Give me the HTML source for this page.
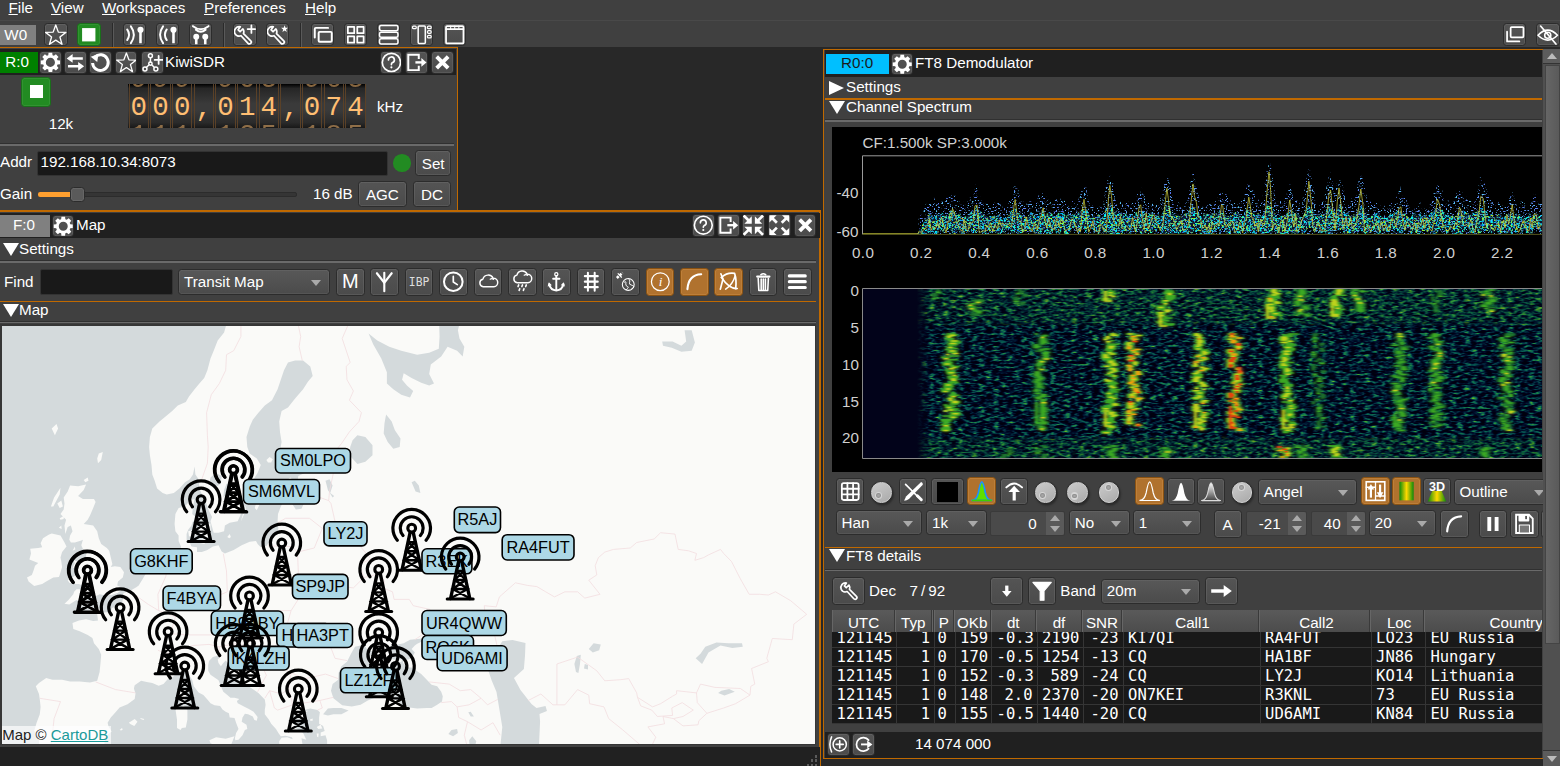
<!DOCTYPE html><html><head><meta charset="utf-8"><title>SDRangel</title><style>
*{box-sizing:border-box;margin:0;padding:0}
html,body{width:1560px;height:766px;overflow:hidden;background:#404040}
body{position:relative;font-family:"Liberation Sans",sans-serif;font-size:15.2px;color:#fff;line-height:1}
.a{position:absolute}
.t{position:absolute;white-space:nowrap;line-height:17px;height:17px}
.b{position:absolute;border:1px solid #2c2c2c;border-radius:3.5px;background:linear-gradient(#545454,#4b4b4b);box-shadow:inset 0 0 0 1px rgba(255,255,255,.075)}
.b.on{background:#b0722e;border-color:#8a5212;box-shadow:inset 0 0 0 1px rgba(255,190,110,.18)}
.b svg{position:absolute;left:0;top:0;width:100%;height:100%}
.or{position:absolute;background:#c06900}
.cb{position:absolute;border:1px solid #2c2c2c;border-radius:3.5px;background:linear-gradient(#585858,#4b4b4b);box-shadow:inset 0 0 0 1px rgba(255,255,255,.06)}
.cb span{position:absolute;left:5px;top:50%;margin-top:-9px;line-height:17px;white-space:nowrap}
.cb i{position:absolute;right:8px;top:50%;margin-top:-2px;border:5px solid transparent;border-top:6px solid #aaa;border-bottom:0}
.sp{position:absolute;border:1px solid #3a3a3a;border-radius:2px;background:#4a4a4a}
.sp span{position:absolute;top:50%;margin-top:-8px;line-height:17px;text-align:right}
.sp em{position:absolute;right:0;top:0;bottom:0;width:18px;background:#5a5a5a;border-radius:0 2px 2px 0}
.sp em:before{content:"";position:absolute;left:4px;top:3px;border:5px solid transparent;border-bottom:6px solid #aaa;border-top:0}
.sp em:after{content:"";position:absolute;left:4px;bottom:3px;border:5px solid transparent;border-top:6px solid #aaa;border-bottom:0}
.hl{position:absolute;height:1.5px;background:#6a6a6a;box-shadow:0 -1px 0 #303030}
.tri{position:absolute;width:0;height:0}
.mono{font-family:"DejaVu Sans Mono","Liberation Mono",monospace}
</style></head><body>
<div class="t " style="left:8.5px;top:-1.1px;"><u>F</u>ile</div>
<div class="t " style="left:51px;top:-1.1px;"><u>V</u>iew</div>
<div class="t " style="left:102px;top:-1.1px;"><u>W</u>orkspaces</div>
<div class="t " style="left:204px;top:-1.1px;"><u>P</u>references</div>
<div class="t " style="left:305px;top:-1.1px;"><u>H</u>elp</div>
<div class="a" style="left:0px;top:20px;width:1560px;height:1px;background:rgba(255,255,255,.05);"></div>
<div class="a" style="left:0px;top:24.5px;width:36px;height:20.5px;background:#808080;"></div>
<div class="t " style="left:4.3px;top:25.6px;">W0</div>
<div class="b " style="left:44px;top:22.7px;width:23.5px;height:23.5px;"><svg viewBox="1.5 1.5 21 21" fill="none" stroke="#fff" stroke-width="1.6" stroke-linecap="round" stroke-linejoin="round"><polygon points="12.00,2.50 14.53,9.42 21.89,9.69 16.09,14.23 18.11,21.31 12.00,17.20 5.89,21.31 7.91,14.23 2.11,9.69 9.47,9.42" stroke-width="1.3"/></svg></div>
<div class="b " style="left:77px;top:22.7px;width:23.5px;height:23.5px;background:#228b22;border-color:#1a6e1a"><svg viewBox="1.5 1.5 21 21" fill="none" stroke="#fff" stroke-width="1.6" stroke-linecap="round" stroke-linejoin="round"><rect x="5.5" y="5.5" width="13" height="13" fill="#fff" stroke="none"/></svg></div>
<div class="b " style="left:122.5px;top:22.7px;width:23.5px;height:23.5px;"><svg viewBox="1.5 1.5 21 21" fill="none" stroke="#fff" stroke-width="1.6" stroke-linecap="round" stroke-linejoin="round"><path d="M4.6 6.8Q8.2 12 4.6 17.2M8.2 3.8Q14 12 8.2 20.2" stroke-width="1.9"/><circle cx="17.6" cy="7.2" r="3" fill="#fff" stroke="none"/><path d="M17.6 8V20.3" stroke-width="2.5" stroke-linecap="butt"/></svg></div>
<div class="b " style="left:155.5px;top:22.7px;width:23.5px;height:23.5px;"><svg viewBox="1.5 1.5 21 21" fill="none" stroke="#fff" stroke-width="1.6" stroke-linecap="round" stroke-linejoin="round"><path d="M11 6.8Q7.4 12 11 17.2M7.4 3.8Q1.6 12 7.4 20.2" stroke-width="1.9"/><circle cx="17.6" cy="7.2" r="3" fill="#fff" stroke="none"/><path d="M17.6 8V20.3" stroke-width="2.5" stroke-linecap="butt"/></svg></div>
<div class="b " style="left:188.5px;top:22.7px;width:23.5px;height:23.5px;"><svg viewBox="1.5 1.5 21 21" fill="none" stroke="#fff" stroke-width="1.6" stroke-linecap="round" stroke-linejoin="round"><path d="M4.4 3.6Q12 9.6 19.6 3.6M7.2 7.2Q12 11 16.8 7.2" stroke-width="1.9"/><circle cx="7.6" cy="14" r="2.9" fill="#fff" stroke="none"/><circle cx="16.4" cy="14" r="2.9" fill="#fff" stroke="none"/><path d="M7.6 14.5V21.3M16.4 14.5V21.3" stroke-width="2.5" stroke-linecap="butt"/></svg></div>
<div class="b " style="left:233px;top:22.7px;width:23.5px;height:23.5px;"><svg viewBox="1.5 1.5 21 21" fill="none" stroke="#fff" stroke-width="1.6" stroke-linecap="round" stroke-linejoin="round"><g transform="translate(-1.5 1) scale(.95)"><path d="M9.6 3.4A5 5 0 0 0 4 10.2A5 5 0 0 0 10.4 12.6L17.6 20.4A1.9 1.9 0 0 0 20.4 17.8L12.9 10.3A5 5 0 0 0 12.3 5.6L9.4 8.5L7.4 6.5Z" stroke-width="1.8"/></g><path d="M18.5 2.8V10.2M14.8 6.5H22.2" stroke-width="1.7"/></svg></div>
<div class="b " style="left:265.6px;top:22.7px;width:23.5px;height:23.5px;"><svg viewBox="1.5 1.5 21 21" fill="none" stroke="#fff" stroke-width="1.6" stroke-linecap="round" stroke-linejoin="round"><g transform="translate(-1.5 1) scale(.95)"><path d="M9.6 3.4A5 5 0 0 0 4 10.2A5 5 0 0 0 10.4 12.6L17.6 20.4A1.9 1.9 0 0 0 20.4 17.8L12.9 10.3A5 5 0 0 0 12.3 5.6L9.4 8.5L7.4 6.5Z" stroke-width="1.8"/></g><polygon points="18.70,2.70 19.58,5.09 22.12,5.19 20.13,6.76 20.82,9.21 18.70,7.80 16.58,9.21 17.27,6.76 15.28,5.19 17.82,5.09" fill="#fff" stroke="none"/></svg></div>
<div class="b " style="left:310.6px;top:22.7px;width:23.5px;height:23.5px;"><svg viewBox="1.5 1.5 21 21" fill="none" stroke="#fff" stroke-width="1.6" stroke-linecap="round" stroke-linejoin="round"><rect x="8" y="9.2" width="12.8" height="9.6" rx="1" stroke-width="1.9"/><path d="M4.2 14.8V6.3Q4.2 5.3 5.2 5.3H17.2" stroke-width="1.9"/></svg></div>
<div class="b " style="left:343.6px;top:22.7px;width:23.5px;height:23.5px;"><svg viewBox="1.5 1.5 21 21" fill="none" stroke="#fff" stroke-width="1.6" stroke-linecap="round" stroke-linejoin="round"><rect x="4.3" y="4.3" width="6.2" height="6.2" stroke-width="1.7"/><rect x="13.5" y="4.3" width="6.2" height="6.2" stroke-width="1.7"/><rect x="4.3" y="13.5" width="6.2" height="6.2" stroke-width="1.7"/><rect x="13.5" y="13.5" width="6.2" height="6.2" stroke-width="1.7"/></svg></div>
<div class="b " style="left:376.6px;top:22.7px;width:23.5px;height:23.5px;"><svg viewBox="1.5 1.5 21 21" fill="none" stroke="#fff" stroke-width="1.6" stroke-linecap="round" stroke-linejoin="round"><rect x="3" y="3" width="18" height="5" rx="1.5" stroke-width="1.5"/><rect x="3" y="9.5" width="18" height="5" rx="1.5" stroke-width="1.5"/><rect x="3" y="16" width="18" height="5" rx="1.5" stroke-width="1.5"/></svg></div>
<div class="b " style="left:409.6px;top:22.7px;width:23.5px;height:23.5px;"><svg viewBox="1.5 1.5 21 21" fill="none" stroke="#fff" stroke-width="1.6" stroke-linecap="round" stroke-linejoin="round"><rect x="8.5" y="3.5" width="7" height="17" rx="1" stroke-width="1.5"/><rect x="3" y="3.5" width="3.6" height="2.6" rx="1" stroke-width="1.2"/><rect x="17.6" y="3.5" width="3.6" height="2.6" rx="1" stroke-width="1.2"/><rect x="17.6" y="8" width="3.6" height="2.6" rx="1" stroke-width="1.2"/><rect x="17.6" y="12.5" width="3.6" height="2.6" rx="1" stroke-width="1.2"/></svg></div>
<div class="b " style="left:442.6px;top:22.7px;width:23.5px;height:23.5px;"><svg viewBox="1.5 1.5 21 21" fill="none" stroke="#fff" stroke-width="1.6" stroke-linecap="round" stroke-linejoin="round"><rect x="3.5" y="3.5" width="17" height="17" rx="1" stroke-width="1.7"/><path d="M3.5 6.5H20.5" stroke-width="1.7"/><path d="M8 3.5V6.5M12 3.5V6.5M16 3.5V6.5" stroke-width="1"/></svg></div>
<div class="b " style="left:1502.7px;top:22.7px;width:23.5px;height:23.5px;"><svg viewBox="1.5 1.5 21 21" fill="none" stroke="#fff" stroke-width="1.6" stroke-linecap="round" stroke-linejoin="round"><rect x="8" y="4.5" width="12.5" height="10" rx="1" stroke-width="1.7"/><path d="M4.5 9V18.5H16.5" stroke-width="1.7"/></svg></div>
<div class="b " style="left:1536px;top:22.7px;width:23.5px;height:23.5px;"><svg viewBox="1.5 1.5 21 21" fill="none" stroke="#fff" stroke-width="1.6" stroke-linecap="round" stroke-linejoin="round"><path d="M2.5 12.5Q12 2.5 21.5 12.5Q12 22 2.5 12.5Z" stroke-width="1.6"/><circle cx="12" cy="12.5" r="3" stroke-width="1.5"/><path d="M5 3.5L20 21" stroke-width="1.7"/></svg></div>
<div class="a" style="left:112px;top:23px;width:1px;height:24px;background:#2a2a2a;"></div>
<div class="a" style="left:113px;top:23px;width:1px;height:24px;background:#5a5a5a;"></div>
<div class="a" style="left:223px;top:23px;width:1px;height:24px;background:#2a2a2a;"></div>
<div class="a" style="left:224px;top:23px;width:1px;height:24px;background:#5a5a5a;"></div>
<div class="a" style="left:300px;top:23px;width:1px;height:24px;background:#2a2a2a;"></div>
<div class="a" style="left:301px;top:23px;width:1px;height:24px;background:#5a5a5a;"></div>
<div class="a" style="left:0px;top:47px;width:1560px;height:719px;background:#282828;"></div>
<div class="a" style="left:-2px;top:47px;width:459.5px;height:164.5px;background:#404040;border:1.5px solid #c06900"></div>
<div class="a" style="left:0px;top:48.5px;width:456px;height:26px;background:#202020;"></div>
<div class="a" style="left:0px;top:52px;width:37.5px;height:20.5px;background:#008000;"></div>
<div class="t " style="left:5.2px;top:53.0px;">R:0</div>
<div class="b " style="left:39px;top:51px;width:22.8px;height:22.8px;"><svg viewBox="1.5 1.5 21 21" fill="none" stroke="#fff" stroke-width="1.6" stroke-linecap="round" stroke-linejoin="round"><path fill="#fff" fill-rule="evenodd" stroke="none" d="M21.72,10.13L21.72,13.87L19.19,14.14L18.60,15.56L20.20,17.55L17.55,20.20L15.57,18.60L14.15,19.19L13.87,21.72L10.13,21.72L9.86,19.19L8.44,18.60L6.45,20.20L3.80,17.55L5.40,15.57L4.81,14.15L2.28,13.87L2.28,10.13L4.81,9.86L5.40,8.44L3.80,6.45L6.45,3.80L8.43,5.40L9.85,4.81L10.13,2.28L13.87,2.28L14.14,4.81L15.56,5.40L17.55,3.80L20.20,6.45L18.60,8.43L19.19,9.85Z M12 7.4A4.6 4.6 0 1 0 12 16.6A4.6 4.6 0 1 0 12 7.4Z"/></svg></div>
<div class="b " style="left:64px;top:51px;width:22.8px;height:22.8px;"><svg viewBox="1.5 1.5 21 21" fill="none" stroke="#fff" stroke-width="1.6" stroke-linecap="round" stroke-linejoin="round"><path d="M8 8H19.5M16 16H4.5" stroke-width="2.5" stroke-linecap="butt"/><path d="M3.2 8L9.2 3.6V12.4ZM20.8 16L14.8 11.6V20.4Z" fill="#fff" stroke="none"/></svg></div>
<div class="b " style="left:89px;top:51px;width:22.8px;height:22.8px;"><svg viewBox="1.5 1.5 21 21" fill="none" stroke="#fff" stroke-width="1.6" stroke-linecap="round" stroke-linejoin="round"><path d="M6.6 6.4A7.9 7.9 0 1 1 4.1 12.6" stroke-width="3" stroke-linecap="butt"/><path d="M2.2 6.2L10 3.4L8.8 11.6Z" fill="#fff" stroke="none"/></svg></div>
<div class="b " style="left:114.5px;top:51px;width:22.8px;height:22.8px;"><svg viewBox="1.5 1.5 21 21" fill="none" stroke="#fff" stroke-width="1.6" stroke-linecap="round" stroke-linejoin="round"><polygon points="12.00,2.50 14.53,9.42 21.89,9.69 16.09,14.23 18.11,21.31 12.00,17.20 5.89,21.31 7.91,14.23 2.11,9.69 9.47,9.42" stroke-width="1.3"/></svg></div>
<div class="b " style="left:141px;top:51px;width:22.8px;height:22.8px;"><svg viewBox="1.5 1.5 21 21" fill="none" stroke="#fff" stroke-width="1.6" stroke-linecap="round" stroke-linejoin="round"><circle cx="10" cy="5.2" r="2" stroke-width="1.5"/><circle cx="4.5" cy="18.6" r="2" stroke-width="1.5"/><circle cx="15.5" cy="18.6" r="2" stroke-width="1.5"/><circle cx="10" cy="13.2" r="1.7" stroke-width="1.5"/><path d="M10 7.2V11.5M8.7 14.4L5.9 17.1M11.3 14.4L14.1 17.1" stroke-width="1.5"/><path d="M18.3 5.5V13.5M14.3 9.5H22.3" stroke-width="1.8"/></svg></div>
<div class="b " style="left:379.7px;top:51px;width:22.8px;height:22.8px;"><svg viewBox="1.5 1.5 21 21" fill="none" stroke="#fff" stroke-width="1.6" stroke-linecap="round" stroke-linejoin="round"><circle cx="12" cy="12" r="9.2" stroke-width="1.7"/><path d="M9 9.6A3 3 0 1 1 12.8 12.4Q12 12.9 12 14.2" stroke-width="1.7"/><circle cx="12" cy="17" r="1.1" fill="#fff" stroke="none"/></svg></div>
<div class="b " style="left:405.4px;top:51px;width:22.8px;height:22.8px;"><svg viewBox="1.5 1.5 21 21" fill="none" stroke="#fff" stroke-width="1.6" stroke-linecap="round" stroke-linejoin="round"><path d="M14.4 8.6V4.2H3.8V19.8H14.4V15.4" stroke-width="2" stroke-linejoin="miter" stroke-linecap="butt"/><path d="M11 12H18" stroke-width="2.4" stroke-linecap="butt"/><path d="M17 7.6L22.2 12L17 16.4Z" fill="#fff" stroke="none"/></svg></div>
<div class="b " style="left:431px;top:51px;width:22.8px;height:22.8px;"><svg viewBox="1.5 1.5 21 21" fill="none" stroke="#fff" stroke-width="1.6" stroke-linecap="round" stroke-linejoin="round"><path d="M6.2 6.2L17.8 17.8M17.8 6.2L6.2 17.8" stroke-width="3.9" stroke-linecap="butt"/></svg></div>
<div class="t " style="left:165px;top:53.0px;">KiwiSDR</div>
<div class="b" style="left:20.7px;top:77.3px;width:30px;height:29.3px;background:#228b22;border-color:#1a6e1a"></div>
<div class="a" style="left:29.5px;top:85px;width:13px;height:13px;background:#fff;"></div>
<div class="t " style="left:48.7px;top:115.2px;">12k</div>
<div class="t " style="left:377px;top:98.4px;">kHz</div>
<div class="a" style="left:128px;top:84px;width:238.3px;height:44px;overflow:hidden;background:linear-gradient(#000,#262626 10%,#3a3a3a 45%,#3a3a3a 60%,#2a2a2a 88%,#181818);font-family:'Liberation Mono',monospace;font-size:27.5px;color:#ffbe72">
<div class="a" style="left:0.60px;top:0;width:1px;height:44px;background:#5a4128"></div><div class="a" style="left:19.86px;top:0;width:1px;height:44px;background:#5a4128"></div>
<div class="a" style="left:0.00px;top:-19.8px;width:21.66px;height:31px;line-height:31px;text-align:center;opacity:0.5">9</div>
<div class="a" style="left:0.00px;top:8.4px;width:21.66px;height:31px;line-height:31px;text-align:center;opacity:1">0</div>
<div class="a" style="left:0.00px;top:35.6px;width:21.66px;height:31px;line-height:31px;text-align:center;opacity:0.5">1</div>
<div class="a" style="left:22.26px;top:0;width:1px;height:44px;background:#5a4128"></div><div class="a" style="left:41.53px;top:0;width:1px;height:44px;background:#5a4128"></div>
<div class="a" style="left:21.66px;top:-19.8px;width:21.66px;height:31px;line-height:31px;text-align:center;opacity:0.5">9</div>
<div class="a" style="left:21.66px;top:8.4px;width:21.66px;height:31px;line-height:31px;text-align:center;opacity:1">0</div>
<div class="a" style="left:21.66px;top:35.6px;width:21.66px;height:31px;line-height:31px;text-align:center;opacity:0.5">1</div>
<div class="a" style="left:43.93px;top:0;width:1px;height:44px;background:#5a4128"></div><div class="a" style="left:63.19px;top:0;width:1px;height:44px;background:#5a4128"></div>
<div class="a" style="left:43.33px;top:-19.8px;width:21.66px;height:31px;line-height:31px;text-align:center;opacity:0.5">9</div>
<div class="a" style="left:43.33px;top:8.4px;width:21.66px;height:31px;line-height:31px;text-align:center;opacity:1">0</div>
<div class="a" style="left:43.33px;top:35.6px;width:21.66px;height:31px;line-height:31px;text-align:center;opacity:0.5">1</div>
<div class="a" style="left:65.59px;top:0;width:1px;height:44px;background:#5a4128"></div><div class="a" style="left:84.85px;top:0;width:1px;height:44px;background:#5a4128"></div>
<div class="a" style="left:64.99px;top:8.6px;width:21.66px;height:31px;line-height:31px;text-align:center">,</div>
<div class="a" style="left:87.25px;top:0;width:1px;height:44px;background:#5a4128"></div><div class="a" style="left:106.52px;top:0;width:1px;height:44px;background:#5a4128"></div>
<div class="a" style="left:86.65px;top:-19.8px;width:21.66px;height:31px;line-height:31px;text-align:center;opacity:0.5">9</div>
<div class="a" style="left:86.65px;top:8.4px;width:21.66px;height:31px;line-height:31px;text-align:center;opacity:1">0</div>
<div class="a" style="left:86.65px;top:35.6px;width:21.66px;height:31px;line-height:31px;text-align:center;opacity:0.5">1</div>
<div class="a" style="left:108.92px;top:0;width:1px;height:44px;background:#5a4128"></div><div class="a" style="left:128.18px;top:0;width:1px;height:44px;background:#5a4128"></div>
<div class="a" style="left:108.32px;top:-19.8px;width:21.66px;height:31px;line-height:31px;text-align:center;opacity:0.5">0</div>
<div class="a" style="left:108.32px;top:8.4px;width:21.66px;height:31px;line-height:31px;text-align:center;opacity:1">1</div>
<div class="a" style="left:108.32px;top:35.6px;width:21.66px;height:31px;line-height:31px;text-align:center;opacity:0.5">2</div>
<div class="a" style="left:130.58px;top:0;width:1px;height:44px;background:#5a4128"></div><div class="a" style="left:149.85px;top:0;width:1px;height:44px;background:#5a4128"></div>
<div class="a" style="left:129.98px;top:-19.8px;width:21.66px;height:31px;line-height:31px;text-align:center;opacity:0.5">3</div>
<div class="a" style="left:129.98px;top:8.4px;width:21.66px;height:31px;line-height:31px;text-align:center;opacity:1">4</div>
<div class="a" style="left:129.98px;top:35.6px;width:21.66px;height:31px;line-height:31px;text-align:center;opacity:0.5">5</div>
<div class="a" style="left:152.25px;top:0;width:1px;height:44px;background:#5a4128"></div><div class="a" style="left:171.51px;top:0;width:1px;height:44px;background:#5a4128"></div>
<div class="a" style="left:151.65px;top:8.6px;width:21.66px;height:31px;line-height:31px;text-align:center">,</div>
<div class="a" style="left:173.91px;top:0;width:1px;height:44px;background:#5a4128"></div><div class="a" style="left:193.17px;top:0;width:1px;height:44px;background:#5a4128"></div>
<div class="a" style="left:173.31px;top:-19.8px;width:21.66px;height:31px;line-height:31px;text-align:center;opacity:0.5">9</div>
<div class="a" style="left:173.31px;top:8.4px;width:21.66px;height:31px;line-height:31px;text-align:center;opacity:1">0</div>
<div class="a" style="left:173.31px;top:35.6px;width:21.66px;height:31px;line-height:31px;text-align:center;opacity:0.5">1</div>
<div class="a" style="left:195.57px;top:0;width:1px;height:44px;background:#5a4128"></div><div class="a" style="left:214.84px;top:0;width:1px;height:44px;background:#5a4128"></div>
<div class="a" style="left:194.97px;top:-19.8px;width:21.66px;height:31px;line-height:31px;text-align:center;opacity:0.5">6</div>
<div class="a" style="left:194.97px;top:8.4px;width:21.66px;height:31px;line-height:31px;text-align:center;opacity:1">7</div>
<div class="a" style="left:194.97px;top:35.6px;width:21.66px;height:31px;line-height:31px;text-align:center;opacity:0.5">8</div>
<div class="a" style="left:217.24px;top:0;width:1px;height:44px;background:#5a4128"></div><div class="a" style="left:236.50px;top:0;width:1px;height:44px;background:#5a4128"></div>
<div class="a" style="left:216.64px;top:-19.8px;width:21.66px;height:31px;line-height:31px;text-align:center;opacity:0.5">3</div>
<div class="a" style="left:216.64px;top:8.4px;width:21.66px;height:31px;line-height:31px;text-align:center;opacity:1">4</div>
<div class="a" style="left:216.64px;top:35.6px;width:21.66px;height:31px;line-height:31px;text-align:center;opacity:0.5">5</div>
</div>
<div class="hl" style="left:0;top:144px;width:454px"></div>
<div class="t " style="left:0px;top:153.4px;">Addr</div>
<div class="a" style="left:36.9px;top:150.6px;width:351px;height:25.2px;background:#191919;border:1px solid #333;border-radius:2px"></div>
<div class="t " style="left:40.5px;top:153.4px;">192.168.10.34:8073</div>
<div class="a" style="left:393px;top:154.3px;width:17.6px;height:17.6px;border-radius:50%;background:#228b22"></div>
<div class="b " style="left:415.2px;top:150.2px;width:36px;height:25.6px;"><div class="t" style="left:0;width:100%;text-align:center;top:3.4px">Set</div></div>
<div class="t " style="left:0px;top:185.1px;">Gain</div>
<div class="a" style="left:38px;top:191.8px;width:259px;height:5px;background:#353535;border:1px solid #2c2c2c;border-radius:2px"></div>
<div class="a" style="left:38px;top:191.8px;width:34px;height:5px;background:#ffa030;border-radius:2px"></div>
<div class="b" style="left:69.6px;top:187.2px;width:15.2px;height:14.4px;background:#5a5a5a"></div>
<div class="t " style="left:313px;top:185.1px;">16 dB</div>
<div class="b " style="left:357.7px;top:181.4px;width:49.3px;height:25.2px;"><div class="t" style="left:0;width:100%;text-align:center;top:3.2px">AGC</div></div>
<div class="b " style="left:412.8px;top:181.4px;width:38.4px;height:25.2px;"><div class="t" style="left:0;width:100%;text-align:center;top:3.2px">DC</div></div>
<div class="a" style="left:-2px;top:210.4px;width:822.7px;height:570px;background:#404040;border:1.5px solid #c06900;border-top-width:2px;border-right-width:2px"></div>
<div class="a" style="left:0px;top:212.5px;width:819.5px;height:25.5px;background:#202020;"></div>
<div class="a" style="left:0px;top:215px;width:49.5px;height:21.5px;background:#808080;"></div>
<div class="t " style="left:13px;top:216.4px;">F:0</div>
<div class="b " style="left:51.5px;top:214.5px;width:22.5px;height:22.5px;"><svg viewBox="1.5 1.5 21 21" fill="none" stroke="#fff" stroke-width="1.6" stroke-linecap="round" stroke-linejoin="round"><path fill="#fff" fill-rule="evenodd" stroke="none" d="M21.72,10.13L21.72,13.87L19.19,14.14L18.60,15.56L20.20,17.55L17.55,20.20L15.57,18.60L14.15,19.19L13.87,21.72L10.13,21.72L9.86,19.19L8.44,18.60L6.45,20.20L3.80,17.55L5.40,15.57L4.81,14.15L2.28,13.87L2.28,10.13L4.81,9.86L5.40,8.44L3.80,6.45L6.45,3.80L8.43,5.40L9.85,4.81L10.13,2.28L13.87,2.28L14.14,4.81L15.56,5.40L17.55,3.80L20.20,6.45L18.60,8.43L19.19,9.85Z M12 7.4A4.6 4.6 0 1 0 12 16.6A4.6 4.6 0 1 0 12 7.4Z"/></svg></div>
<div class="t " style="left:76px;top:216.4px;">Map</div>
<div class="b " style="left:692px;top:214.3px;width:22.6px;height:22.4px;"><svg viewBox="1.5 1.5 21 21" fill="none" stroke="#fff" stroke-width="1.6" stroke-linecap="round" stroke-linejoin="round"><circle cx="12" cy="12" r="9.2" stroke-width="1.7"/><path d="M9 9.6A3 3 0 1 1 12.8 12.4Q12 12.9 12 14.2" stroke-width="1.7"/><circle cx="12" cy="17" r="1.1" fill="#fff" stroke="none"/></svg></div>
<div class="b " style="left:717px;top:214.3px;width:22.6px;height:22.4px;"><svg viewBox="1.5 1.5 21 21" fill="none" stroke="#fff" stroke-width="1.6" stroke-linecap="round" stroke-linejoin="round"><path d="M14.4 8.6V4.2H3.8V19.8H14.4V15.4" stroke-width="2" stroke-linejoin="miter" stroke-linecap="butt"/><path d="M11 12H18" stroke-width="2.4" stroke-linecap="butt"/><path d="M17 7.6L22.2 12L17 16.4Z" fill="#fff" stroke="none"/></svg></div>
<div class="b " style="left:742px;top:214.3px;width:22.6px;height:22.4px;"><svg viewBox="1.5 1.5 21 21" fill="none" stroke="#fff" stroke-width="1.6" stroke-linecap="round" stroke-linejoin="round"><path d="M2 2L9 9" stroke-width="2.8" stroke-linecap="butt"/><path d="M10.4 10.4L2.8000000000000007 10.4L10.4 2.8000000000000007Z" fill="#fff" stroke="none"/><path d="M2 22L9 15" stroke-width="2.8" stroke-linecap="butt"/><path d="M10.4 13.6L2.8000000000000007 13.6L10.4 21.2Z" fill="#fff" stroke="none"/><path d="M22 2L15 9" stroke-width="2.8" stroke-linecap="butt"/><path d="M13.6 10.4L21.2 10.4L13.6 2.8000000000000007Z" fill="#fff" stroke="none"/><path d="M22 22L15 15" stroke-width="2.8" stroke-linecap="butt"/><path d="M13.6 13.6L21.2 13.6L13.6 21.2Z" fill="#fff" stroke="none"/></svg></div>
<div class="b " style="left:768px;top:214.3px;width:22.6px;height:22.4px;"><svg viewBox="1.5 1.5 21 21" fill="none" stroke="#fff" stroke-width="1.6" stroke-linecap="round" stroke-linejoin="round"><path d="M9.5 9.5L3.5 3.5" stroke-width="2.8" stroke-linecap="butt"/><path d="M1.8000000000000007 1.8000000000000007L9.2 1.8000000000000007L1.8000000000000007 9.2Z" fill="#fff" stroke="none"/><path d="M9.5 14.5L3.5 20.5" stroke-width="2.8" stroke-linecap="butt"/><path d="M1.8000000000000007 22.2L9.2 22.2L1.8000000000000007 14.8Z" fill="#fff" stroke="none"/><path d="M14.5 9.5L20.5 3.5" stroke-width="2.8" stroke-linecap="butt"/><path d="M22.2 1.8000000000000007L14.8 1.8000000000000007L22.2 9.2Z" fill="#fff" stroke="none"/><path d="M14.5 14.5L20.5 20.5" stroke-width="2.8" stroke-linecap="butt"/><path d="M22.2 22.2L14.8 22.2L22.2 14.8Z" fill="#fff" stroke="none"/></svg></div>
<div class="b " style="left:793.6px;top:214.3px;width:22.6px;height:22.4px;"><svg viewBox="1.5 1.5 21 21" fill="none" stroke="#fff" stroke-width="1.6" stroke-linecap="round" stroke-linejoin="round"><path d="M6.2 6.2L17.8 17.8M17.8 6.2L6.2 17.8" stroke-width="3.9" stroke-linecap="butt"/></svg></div>
<div class="tri" style="left:2.8px;top:243px;border:8px solid transparent;border-top:13.6px solid #fff;border-bottom:0"></div>
<div class="t " style="left:19px;top:240.4px;">Settings</div>
<div class="hl" style="left:0;top:261px;width:816px"></div>
<div class="t " style="left:4px;top:272.9px;">Find</div>
<div class="a" style="left:39.5px;top:268.5px;width:133px;height:26.5px;background:#191919;border:1px solid #333;border-radius:2px"></div>
<div class="cb" style="left:178px;top:268.5px;width:152px;height:26.5px"><span>Transit Map</span><i></i></div>
<div class="b " style="left:336px;top:268.2px;width:28.6px;height:27.4px;"><div class="t" style="left:0;width:100%;text-align:center;top:2.3px;font-size:20px;line-height:20px;height:20px">M</div></div>
<div class="b " style="left:370.4px;top:268.2px;width:28.6px;height:27.4px;"><svg viewBox="0 0 24 24" fill="none" stroke="#fff" stroke-width="1.6" stroke-linecap="round" stroke-linejoin="round"><path d="M12 3.5V21" stroke-width="2"/><path d="M5 4L12 13L19 4" stroke-width="2" stroke-linejoin="miter"/></svg></div>
<div class="b " style="left:404.8px;top:268.2px;width:28.6px;height:27.4px;"><div class="t" style="left:0;width:100%;text-align:center;top:6px;font-family:'DejaVu Sans Mono',monospace;font-size:11.4px;color:#ddd;line-height:14px;height:14px">IBP</div></div>
<div class="b " style="left:439.2px;top:268.2px;width:28.6px;height:27.4px;"><svg viewBox="0 0 24 24" fill="none" stroke="#fff" stroke-width="1.6" stroke-linecap="round" stroke-linejoin="round"><circle cx="12" cy="12" r="8.8" stroke-width="1.9"/><path d="M12 7V12.3L15.8 14.8" stroke-width="1.6"/></svg></div>
<div class="b " style="left:473.6px;top:268.2px;width:28.6px;height:27.4px;"><svg viewBox="0 0 24 24" fill="none" stroke="#fff" stroke-width="1.6" stroke-linecap="round" stroke-linejoin="round"><g transform="translate(0 1.2)"><path d="M7.2 15.5A3.6 3.6 0 0 1 6.9 8.4A5.2 5.2 0 0 1 16.6 7.5A4 4 0 0 1 17.2 15.5Z" stroke-width="1.4"/><path d="M13.8 8.4Q15.4 7.2 16.9 8.6" stroke-width="1.2"/></g></svg></div>
<div class="b " style="left:508px;top:268.2px;width:28.6px;height:27.4px;"><svg viewBox="0 0 24 24" fill="none" stroke="#fff" stroke-width="1.6" stroke-linecap="round" stroke-linejoin="round"><g transform="translate(0 -2.6)"><path d="M7.2 15.5A3.6 3.6 0 0 1 6.9 8.4A5.2 5.2 0 0 1 16.6 7.5A4 4 0 0 1 17.2 15.5Z" stroke-width="1.4"/><path d="M13.8 8.4Q15.4 7.2 16.9 8.6" stroke-width="1.2"/></g><path d="M8.6 15L8 16.6M12.2 15L11.6 16.6M15.8 15L15.2 16.6M9.6 18.6L9 20.2M13.6 18.6L13 20.2" stroke-width="1.5"/></svg></div>
<div class="b " style="left:542.4px;top:268.2px;width:28.6px;height:27.4px;"><svg viewBox="0 0 24 24" fill="none" stroke="#fff" stroke-width="1.6" stroke-linecap="round" stroke-linejoin="round"><circle cx="12" cy="5" r="1.5" stroke-width="1.2"/><path d="M12 6.5V20M9 9.2H15" stroke-width="1.8"/><path d="M5.2 14.5Q6.5 20 12 20.3Q17.5 20 18.8 14.5" stroke-width="1.9"/><path d="M3.8 16.6L5 12.6L7.8 15.4ZM20.2 16.6L19 12.6L16.2 15.4Z" fill="#fff" stroke="none"/></svg></div>
<div class="b " style="left:576.8px;top:268.2px;width:28.6px;height:27.4px;"><svg viewBox="0 0 24 24" fill="none" stroke="#fff" stroke-width="1.6" stroke-linecap="round" stroke-linejoin="round"><path d="M8.8 3.5V20.5M15.2 3.5V20.5" stroke-width="1.9"/><path d="M6 6.8H18M6 12H18M6 17.2H18" stroke-width="2.2"/></svg></div>
<div class="b " style="left:611.2px;top:268.2px;width:28.6px;height:27.4px;"><svg viewBox="0 0 24 24" fill="none" stroke="#fff" stroke-width="1.6" stroke-linecap="round" stroke-linejoin="round"><circle cx="14.8" cy="14.6" r="5.6" stroke-width="1"/><path d="M11 12.5Q13 11 12.5 13.5T14 16.5T13 19.5M15.5 9.5Q17 11.5 16 13T18.5 15.5T18 19" stroke-width=".9"/><path d="M4 8.5L9.5 3.5" stroke-width="2.4" stroke-linecap="butt" stroke-dasharray="2.4 1.2"/><path d="M5.2 4.4L8.4 7.8" stroke-width="1.1"/></svg></div>
<div class="b on" style="left:645.6px;top:268.2px;width:28.6px;height:27.4px;"><svg viewBox="0 0 24 24" fill="none" stroke="#fff" stroke-width="1.6" stroke-linecap="round" stroke-linejoin="round"><circle cx="12" cy="12" r="8.4" stroke-width="1.2"/><text x="12.2" y="16.4" text-anchor="middle" font-family="Liberation Serif,serif" font-style="italic" font-size="12.5" fill="#fff" stroke="none">i</text></svg></div>
<div class="b on" style="left:680px;top:268.2px;width:28.6px;height:27.4px;"><svg viewBox="0 0 24 24" fill="none" stroke="#fff" stroke-width="1.6" stroke-linecap="round" stroke-linejoin="round"><path d="M5.5 19Q6.5 5.5 18.5 5" stroke-width="2"/></svg></div>
<div class="b on" style="left:714.4px;top:268.2px;width:28.6px;height:27.4px;"><svg viewBox="0 0 24 24" fill="none" stroke="#fff" stroke-width="1.6" stroke-linecap="round" stroke-linejoin="round"><path d="M5 4.5L7 9.5L4.5 19" stroke-width="1.6"/><path d="M5.5 8Q11 3 18 4.2Q20 10 19 18.5" stroke-width="1.6"/><path d="M5.5 8Q13 19 20.5 18.5" stroke-width="1.5"/><path d="M18.5 6.5Q16 15 9.5 19" stroke-width="1.5"/></svg></div>
<div class="b " style="left:748.8px;top:268.2px;width:28.6px;height:27.4px;"><svg viewBox="0 0 24 24" fill="none" stroke="#fff" stroke-width="1.6" stroke-linecap="round" stroke-linejoin="round"><path d="M6.2 7.2H17.8" stroke-width="2"/><path d="M9.8 5.4Q12 3.6 14.2 5.4" stroke-width="1.5"/><path d="M7.2 9L7.8 20.3H16.2L16.8 9" stroke-width="1.5"/><path d="M10 9.5V19.5M12 9.5V19.5M14 9.5V19.5" stroke-width="1.5"/></svg></div>
<div class="b " style="left:783.2px;top:268.2px;width:28.6px;height:27.4px;"><svg viewBox="0 0 24 24" fill="none" stroke="#fff" stroke-width="1.6" stroke-linecap="round" stroke-linejoin="round"><path d="M4.5 6.5H19.5M4.5 12H19.5M4.5 17.5H19.5" stroke-width="3"/></svg></div>
<div class="or" style="left:0;top:300.5px;width:816px;height:1.5px"></div>
<div class="tri" style="left:2.8px;top:304px;border:8px solid transparent;border-top:13.6px solid #fff;border-bottom:0"></div>
<div class="t " style="left:19px;top:301.4px;">Map</div>
<div class="hl" style="left:0;top:321.6px;width:816px"></div>
<div class="a" style="left:0px;top:323.5px;width:816px;height:421px;background:#363636;"></div>
<div class="a" style="left:0px;top:746.5px;width:819.5px;height:25px;background:#212121;"></div>
<div class="a" style="left:1.5px;top:326px;width:813.7px;height:417.5px;background:#fafaf8;"></div>
<svg class="a" style="left:1.5px;top:326px" width="813.7" height="417.5" viewBox="1.5 326 813.7 417.5">
<defs><g id="tw" fill="none" stroke="#000" stroke-linecap="round"><circle r="3.9" stroke-width="3.1"/><path d="M-8.7 7.3A11.4 11.4 0 1 1 8.7 7.3M-14.4 12.1A18.8 18.8 0 1 1 14.4 12.1" stroke-width="3.2"/><path d="M-1.6 4.5L-9.6 41.5M1.6 4.5L9.6 41.5" stroke-width="3.4"/><path d="M-3.6 14H3.6M-5.6 23H5.6M-7.6 32H7.6M-3.6 14L5.6 23L-7.6 32L9 41M3.6 14L-5.6 23L7.6 32L-9 41" stroke-width="2.4"/><path d="M-13 42H13" stroke-width="3"/></g></defs>
<path fill="#d4dadc" d="M-50.1 270.6L226.0 270.6L226.0 324.0L223.6 332.4L217.2 340.6L213.2 350.7L210.0 358.6L206.9 370.3L203.7 377.9L198.9 383.6L194.1 389.2L188.5 396.5L185.3 402.0L177.3 405.6L171.7 411.0L165.4 416.3L159.0 421.5L151.8 428.4L149.4 437.0L148.6 447.0L149.4 455.2L151.0 464.9L151.8 474.5L154.2 480.7L156.6 488.5L162.2 493.0L166.2 494.6L173.3 493.0L178.9 488.5L184.5 482.3L189.3 479.2L192.5 474.5L194.1 466.5L194.9 474.5L198.1 479.2L198.9 488.5L202.1 496.1L205.3 502.1L208.5 511.0L211.6 516.9L210.0 521.2L211.6 527.0L213.2 532.7L218.0 532.7L223.6 531.2L224.4 525.5L229.2 522.7L237.2 521.2L240.4 513.9L242.0 503.6L243.6 496.1L242.8 488.5L247.6 483.8L253.1 479.2L257.1 472.9L260.3 464.9L256.3 458.5L249.2 453.6L246.8 447.0L246.0 437.0L249.2 426.7L252.3 419.8L257.9 412.7L264.3 405.6L271.5 400.2L277.1 389.2L280.3 379.8L283.5 370.3L287.5 362.5L294.6 360.6L302.6 360.6L309.8 366.4L312.2 376.0L307.4 381.7L302.6 389.2L294.6 398.4L287.5 407.4L281.1 411.0L278.7 421.5L279.5 431.9L281.1 442.0L279.5 450.3L283.5 455.2L288.3 458.5L293.0 464.9L300.2 463.3L308.2 460.9L316.2 458.5L324.2 456.0L331.3 455.2L337.7 452.0L343.3 460.1L350.5 464.1L342.5 464.1L335.3 468.1L332.9 471.3L325.0 471.3L317.0 469.7L309.0 471.3L304.2 472.9L297.8 476.0L297.0 482.3L298.6 486.9L305.0 489.2L304.2 496.1L303.4 503.6L301.0 508.8L295.4 509.5L291.4 503.6L289.8 499.1L283.5 500.6L280.3 506.6L277.5 513.9L277.1 521.2L277.9 528.4L276.3 534.1L272.3 539.0L268.3 542.5L265.9 545.9L260.3 547.3L257.1 543.9L255.5 541.1L249.2 541.8L241.2 545.3L233.2 550.1L224.4 553.5L221.2 551.5L218.0 545.3L212.4 546.6L206.9 550.1L201.3 552.1L196.5 552.1L196.5 547.3L190.9 546.6L189.3 542.5L186.1 539.7L186.1 534.1L187.7 529.8L190.9 525.5L192.5 521.2L196.5 518.3L191.7 513.9L192.5 506.6L194.1 499.1L189.3 500.6L184.5 506.6L178.1 508.1L174.9 513.9L174.1 524.1L174.9 531.2L178.1 535.5L178.1 541.1L180.5 546.6L179.7 552.1L177.3 557.6L173.3 556.2L167.0 557.6L165.4 561.0L159.0 560.3L153.4 561.6L147.8 566.3L145.4 573.6L142.2 578.9L138.2 585.4L135.8 587.3L130.2 590.5L123.1 593.1L122.3 599.4L121.5 603.2L116.7 605.7L111.1 608.2L110.3 611.9L103.1 612.5L99.9 611.9L99.1 608.2L94.3 608.2L96.7 614.3L97.5 620.5L92.7 621.1L85.6 619.2L78.4 620.5L72.0 622.9L72.8 628.9L79.2 631.3L87.2 634.9L91.9 637.9L93.5 643.2L98.3 649.0L100.7 654.8L99.9 664.0L99.1 671.9L96.7 680.8L89.5 682.5L79.2 681.4L69.6 681.4L61.6 679.7L52.0 679.7L45.7 678.0L38.5 683.0L35.3 686.3L38.5 694.0L39.3 699.4L40.1 706.9L39.3 714.3L36.1 722.7L33.7 731.0L36.1 734.1L39.3 736.2L38.5 740.3L38.5 759.4L-50.1 759.4ZM101.5 759.4L103.9 743.3L105.5 736.2L111.1 731.6L107.9 725.9L107.1 722.7L110.3 717.5L115.9 711.2L119.1 707.5L127.1 704.2L134.2 698.9L135.0 693.5L133.4 688.5L134.2 685.2L140.6 680.8L146.2 681.9L151.8 683.0L158.2 685.8L163.0 684.1L167.8 678.6L171.7 677.5L176.5 673.0L180.5 670.8L184.5 672.5L188.5 674.7L191.7 679.7L193.3 686.3L198.1 692.4L202.9 695.1L206.9 699.4L210.0 703.2L214.0 705.3L219.6 705.9L222.0 709.6L225.2 711.7L228.4 713.3L229.2 717.5L234.0 718.0L235.6 722.7L238.0 729.0L235.6 733.1L234.4 738.2L234.8 740.3L238.0 739.8L242.0 735.2L244.4 730.0L246.8 729.0L246.0 724.8L241.2 721.7L242.0 717.5L244.4 713.8L247.6 714.3L252.3 716.5L253.9 720.1L256.3 720.7L257.1 717.0L253.1 711.7L248.4 709.1L244.4 706.9L237.2 703.2L236.4 701.0L238.8 698.9L234.0 697.8L230.0 697.8L226.8 695.1L222.8 691.8L220.4 686.3L218.0 680.3L214.8 678.0L210.0 674.7L207.7 670.8L207.7 665.1L208.5 661.1L212.4 657.1L218.0 655.4L219.6 657.1L217.2 659.4L218.0 662.9L220.4 666.3L222.8 662.9L225.2 660.6L228.4 664.0L228.4 668.5L231.6 673.0L236.4 678.6L240.4 680.8L245.2 684.1L249.9 687.4L254.7 690.7L257.9 692.9L261.1 696.2L264.3 699.4L265.1 704.8L264.3 710.1L264.3 714.3L268.3 719.6L270.7 723.8L275.5 729.0L277.9 733.1L280.3 736.2L285.1 735.7L291.4 737.2L292.2 739.3L286.7 737.2L281.1 737.7L278.7 741.3L279.5 759.4ZM305.8 759.4L301.8 743.3L301.0 738.2L305.8 739.8L302.6 733.1L295.4 727.9L293.8 724.8L290.6 719.6L289.8 715.4L292.2 713.3L295.4 716.5L298.6 719.1L301.0 717.5L304.2 717.0L300.2 712.8L303.4 710.1L309.8 708.5L317.0 710.1L319.4 712.2L318.6 717.5L318.6 723.8L322.6 725.9L324.2 731.0L320.2 732.6L320.2 736.2L325.0 735.2L326.6 740.3L326.6 759.4ZM322.6 714.3L327.4 708.5L332.9 708.0L340.9 708.0L348.1 710.6L340.9 714.3L332.9 714.3L327.4 715.4ZM332.9 698.3L330.5 690.7L332.1 684.1L337.7 679.7L338.1 673.0L340.9 666.3L346.5 661.7L350.5 653.7L354.5 646.7L360.1 645.5L364.1 645.5L367.3 650.2L372.8 651.4L377.6 651.4L370.4 654.8L368.9 659.4L375.2 662.9L376.8 668.5L382.4 670.2L388.8 665.7L392.0 664.0L396.8 663.4L400.8 661.7L401.6 659.4L392.8 659.4L388.8 656.0L387.2 650.2L391.2 645.5L397.6 644.4L403.2 643.2L409.5 639.7L416.7 639.1L422.3 638.5L423.1 640.8L416.7 643.8L414.3 645.5L411.1 649.0L414.3 652.5L411.9 657.1L408.0 659.4L403.2 659.4L402.4 662.9L407.2 667.4L411.1 667.4L416.7 671.3L420.7 674.1L426.3 679.7L431.1 684.7L436.7 686.3L440.7 691.8L442.3 696.2L441.5 701.6L436.7 704.8L431.1 708.0L426.3 708.0L416.7 708.5L408.8 707.5L400.8 704.8L396.8 700.5L388.8 697.3L380.8 697.8L375.2 697.3L367.3 700.5L360.1 704.8L351.3 706.4L341.7 705.3ZM436.7 270.6L439.1 336.5L438.3 348.7L428.7 352.7L416.7 354.7L400.8 350.7L388.8 346.7L376.8 340.6L368.1 333.4L372.8 344.6L380.8 358.6L386.4 372.2L386.4 383.6L392.8 389.2L400.8 394.7L409.5 397.5L412.7 391.0L406.4 385.5L401.6 379.8L403.2 373.2L411.1 377.9L420.7 382.7L428.7 385.5L433.5 383.6L428.7 374.1L430.3 364.5L440.7 356.6L447.1 346.7L456.6 350.7L462.2 356.6L463.8 346.7L459.0 338.5L457.4 330.3L460.6 317.6L464.6 270.6ZM349.7 447.0L348.9 455.2L356.9 464.1L364.9 461.7L372.0 455.2L372.0 445.3L364.9 437.0L356.9 435.3L352.1 440.3ZM383.2 433.6L387.2 442.0L392.8 448.7L399.2 447.0L400.0 438.6L394.4 430.2L391.2 421.5L385.6 414.5L384.0 423.3ZM208.5 483.8L213.2 488.5L220.4 483.8L221.2 476.0L215.6 472.9L210.0 477.6ZM222.8 497.6L226.0 494.6L229.2 485.4L226.0 483.8L223.6 490.0ZM325.0 480.7L329.0 479.2L332.1 485.4L329.7 493.0L333.7 496.1L332.1 497.6L327.4 490.0ZM695.2 658.3L701.6 664.0L708.0 652.5L720.0 645.5L731.9 647.9L742.3 646.7L741.5 643.2L728.0 643.2L716.0 642.6L704.8 646.7L700.0 653.7ZM717.6 692.9L724.0 695.6L734.3 691.8L728.7 689.1L720.8 690.7ZM573.9 664.0L575.5 671.9L577.9 673.0L579.5 664.0L580.3 654.8L576.3 656.0ZM588.3 649.0L592.3 652.5L598.7 650.2L600.3 644.4L593.1 643.2ZM583.5 668.5L587.5 669.6L587.5 665.1L584.3 664.0ZM447.9 734.1L452.6 736.2L457.4 733.1L456.6 729.0L451.0 730.0ZM469.4 747.4L474.2 747.4L475.8 741.3L471.8 736.2L468.6 740.3ZM467.8 712.2L470.2 716.5L473.4 716.5L470.2 711.7ZM661.7 341.6L672.1 341.6L680.9 345.7L685.7 341.6L684.1 330.3L691.2 330.3L694.4 342.6L691.2 350.7L680.9 351.7L671.3 347.7L662.5 345.7ZM411.1 482.3L415.1 491.5L419.9 493.0L418.3 485.4L414.3 480.7Z"/>
<path fill="#d4dadc" d="M501.8 641.2L512 640L525 643L524.5 656L523.4 669L513.5 678L520 690L531 704L536 708L545 706L546.5 711L539 714L539.6 721.5L538.5 745L500 745L501.8 727L499 710L496 692L491 680L487.3 669L489 660L495 655L498 647Z"/>
<path fill="#fafaf8" d="M69.6 485.4L77.6 486.2L85.6 484.6L83.2 490.0L77.6 496.1L82.4 499.1L93.5 499.1L95.1 502.1L92.7 508.1L89.5 515.4L87.2 519.8L83.2 524.1L92.7 525.5L96.7 531.2L98.3 538.3L100.7 543.9L106.3 548.0L108.7 550.8L110.3 557.6L111.9 564.3L110.3 567.0L114.3 566.3L119.9 567.0L123.5 572.3L122.3 577.6L117.5 581.5L116.7 585.4L120.7 587.3L120.3 590.5L117.1 593.1L111.1 595.0L103.1 595.0L99.1 594.3L93.5 596.9L89.5 597.5L85.6 595.6L81.6 598.1L80.8 601.9L76.0 600.0L68.8 604.4L64.0 603.8L68.0 600.0L72.8 594.3L73.6 591.8L76.0 589.2L84.0 589.2L87.2 585.4L84.0 586.6L78.4 584.1L75.2 584.1L68.8 582.8L67.2 580.2L72.0 577.6L76.8 573.6L76.8 567.0L72.0 568.3L74.4 563.0L72.8 560.3L76.8 561.6L82.4 561.0L85.6 560.3L85.6 554.9L86.4 550.8L83.2 550.8L80.8 545.3L82.4 539.7L85.6 538.3L80.8 540.4L74.4 542.5L70.4 542.5L68.8 539.7L69.6 535.5L72.0 531.2L70.4 525.5L67.2 527.0L64.8 534.1L64.0 525.5L65.6 519.8L60.0 513.9L63.2 509.5L64.0 503.6L63.2 497.6L67.2 491.5ZM51.2 533.4L60.0 535.5L64.0 542.5L66.0 546.6L61.6 552.1L60.0 557.6L60.8 561.6L61.6 567.0L59.2 574.9L58.4 576.9L52.8 577.6L45.7 581.5L41.7 584.1L33.7 586.0L28.1 581.5L26.5 577.6L31.3 574.9L32.9 571.0L34.5 565.7L37.7 563.0L28.9 559.6L30.5 553.5L29.7 548.7L37.7 548.0L41.7 547.3L40.1 543.2L42.5 538.3L48.1 534.8ZM198.1 528.4L203.7 524.8L210.0 523.4L210.0 529.8L208.5 534.8L206.1 539.0L198.9 535.5ZM187.7 531.2L194.1 529.8L195.7 534.1L193.3 537.6L188.5 536.2ZM197.3 540.4L204.5 539.0L206.9 541.1L203.7 543.9L197.3 542.5ZM254.3 508.1L257.1 497.6L261.1 495.3L259.5 503.6L256.3 510.3ZM240.4 521.2L242.8 512.5L246.0 504.3L244.4 512.5ZM283.5 490.0L287.5 485.4L294.6 485.4L293.0 490.0L286.7 494.6ZM285.9 480.7L289.8 477.6L293.0 480.7L289.8 483.8ZM226.8 536.9L229.2 534.1L230.4 536.9L228.8 538.3ZM265.9 460.1L269.1 456.9L272.3 459.3L270.7 462.5L267.5 462.5ZM178.1 692.9L182.9 689.1L184.5 686.3L185.7 691.8L184.5 699.4L182.9 703.7L179.7 701.6L178.1 697.3ZM174.9 709.1L179.7 708.5L182.9 705.3L186.9 710.1L186.9 719.6L185.3 727.4L181.3 727.9L180.1 730.0L176.5 727.9L176.5 719.6ZM208.9 740.3L215.6 737.2L225.2 738.7L234.0 736.2L230.8 744.3L230.0 752.4L223.6 749.4L214.8 745.3L210.0 743.3ZM128.3 722.7L134.2 719.1L137.0 721.7L133.8 725.9L130.2 724.3ZM139.8 718.0L143.8 719.1L143.0 720.1L140.2 719.1ZM119.1 730.0L121.5 727.9L122.3 729.5L120.7 730.5ZM97.5 463.3L100.7 460.1L102.3 452.0L98.3 453.6L96.7 458.5ZM83.2 480.0L87.2 477.6L88.0 480.7L84.8 482.3ZM53.6 497.6L60.0 487.7L59.2 494.6L52.8 506.6L50.4 506.6ZM56.8 503.6L60.8 500.6L62.4 506.6L59.2 508.1ZM59.2 518.3L63.2 516.1L63.2 519.0L60.0 519.8ZM58.4 527.7L60.8 525.5L61.2 529.1ZM72.0 550.8L74.4 546.6L74.8 549.4ZM51.2 428.4L56.0 424.1L57.6 428.4L54.4 435.3ZM316.2 726.9L320.2 724.8L321.8 728.5L317.8 729.0ZM316.2 733.6L318.2 733.6L317.8 737.2L316.6 736.7ZM309.4 719.6L312.2 718.6L312.2 720.7L309.8 720.7ZM305.4 711.2L307.0 710.6L306.6 712.2Z"/>
<path fill="none" stroke="#f2dde0" stroke-width="0.8" stroke-linejoin="round" d="M201.3 479.2L206.9 463.3L207.7 447.0L206.9 435.3L206.1 412.7L210.8 394.7L218.8 383.6L225.2 370.3L226.0 354.7L233.2 350.7L240.4 336.5L240.4 326.1L247.6 313.3M301.8 360.6L298.6 346.7L300.2 336.5L296.2 317.6M331.3 455.2L340.9 443.7L348.9 431.9L358.5 421.5L360.9 412.7L348.9 400.2L352.9 391.0L346.5 379.8L345.7 366.4L349.7 362.5L341.7 338.5L348.9 321.9L336.9 311.2M502.1 647.9L496.5 645.5L494.1 634.9L484.6 630.1L480.6 624.1L484.6 614.3L483.8 605.7L495.7 606.9L498.9 596.9L514.9 582.8L526.9 585.4L536.4 586.6L545.2 591.8L554.0 596.9L564.4 591.8L577.1 591.8L584.3 598.1L599.5 594.3L588.3 580.2L596.3 574.9L594.7 565.7L597.9 557.6L604.3 552.1L613.0 549.4L629.8 548.0L636.2 542.5L653.7 539.0L660.1 532.7L674.5 534.1L677.7 549.4L688.1 550.8L696.0 553.5L694.4 560.3L703.2 557.6L708.0 554.9L720.0 549.4L723.2 553.5L731.1 561.6L739.9 578.9L748.7 594.3L759.1 594.3L767.9 595.0L775.0 591.8L790.2 600.7L806.2 614.3M527.7 700.5L540.4 694.0L552.4 704.8L556.4 704.8L556.4 664.0L577.1 657.1L596.3 670.8L604.3 680.8L620.2 679.7L628.2 678.6L636.2 692.9L637.0 697.3L652.1 706.9L660.1 703.7L672.1 696.2L676.1 694.0L676.1 690.7L696.0 692.9L700.0 684.1L714.4 687.4L739.9 688.5L749.5 695.1L750.3 686.3L754.3 684.1L751.1 668.5L767.9 661.7L766.3 658.3L771.8 638.5L791.8 639.7L793.4 624.1L806.2 614.3M556.4 704.8L564.4 704.8L577.1 689.6L588.3 695.1L589.1 703.7L603.5 706.9L608.2 718.6L621.8 729.5L640.2 745.3M637.0 697.3L640.2 705.9L651.3 710.1L656.9 716.5L672.1 715.4L671.3 708.0L681.7 702.6L692.8 710.1L682.5 716.5L672.9 718.6L662.5 716.5L664.1 723.8L647.4 726.9L655.3 737.2L650.5 747.4M696.0 692.9L696.8 702.6L706.4 713.3L698.4 720.7L697.6 724.8L682.5 725.9L672.9 718.6M749.5 695.1L735.1 703.7L723.2 708.0L706.4 713.3M414.3 639.7L427.1 631.3L426.3 616.8L429.5 609.4L412.7 605.7L408.8 599.4L393.6 599.4L392.0 591.8L382.4 587.9L384.0 581.5L379.2 573.6L363.3 577.6L359.3 564.3L370.4 558.9L355.3 541.1L356.9 529.8L334.5 521.2L330.5 503.6L328.2 500.6L329.0 491.5L332.9 472.9M428.7 681.9L448.7 684.1L459.8 690.7L470.2 689.6L480.6 698.3L487.0 704.8L497.3 699.4M440.7 702.6L451.0 701.6L456.6 706.9L458.2 717.5L467.0 721.7L463.8 735.2L467.0 747.4M467.0 721.7L480.6 730.0L492.5 722.7L499.7 735.2M456.6 706.9L468.6 704.8L480.6 698.3M363.3 577.6L352.9 587.9L331.3 585.4L309.0 580.2L297.8 584.1L301.0 594.3L290.6 610.6L286.7 624.1L308.2 632.5L321.8 625.3L334.5 658.3L346.5 660.6M297.0 552.1L297.8 571.0L297.8 584.1M334.5 521.2L321.8 528.4L313.8 548.0L297.0 552.1L291.4 546.6L267.5 545.9M321.8 528.4L309.0 518.3L285.1 518.3L277.5 522.7M328.2 500.6L311.4 494.6L304.2 496.1M286.7 624.1L269.1 625.3L259.5 631.3L246.8 628.9L244.4 621.7L259.5 610.6L290.6 610.6M222.8 553.5L226.0 571.0L226.8 591.8L206.1 600.7L219.6 619.2L244.4 621.7M174.9 616.8L170.1 633.7L186.1 634.9L213.2 634.9L219.6 619.2M174.9 616.8L158.2 610.6L157.4 594.3L165.4 576.2L167.0 561.6M158.2 610.6L147.8 604.4L130.2 591.8M95.1 681.9L115.1 689.6L135.0 692.9M39.3 698.3L60.0 701.6L53.6 718.6L50.4 747.4M157.4 650.2L165.4 653.7L163.8 662.9L170.1 677.5M165.4 653.7L177.3 650.2L192.5 645.5L208.5 644.4L218.8 646.7L238.0 643.2L244.4 628.9M218.8 646.7L218.0 657.1M238.0 643.2L259.5 653.7L271.5 650.2L281.1 666.3L289.8 673.0L290.6 673.0L288.3 688.5L292.2 704.8L319.4 700.5L332.9 697.3M290.6 673.0L305.0 678.6L325.0 674.1L337.7 678.6M271.5 650.2L285.1 632.5L286.7 624.1M259.5 653.7L261.1 665.1L265.9 675.3L257.1 691.8M269.1 690.7L273.9 708.0L277.1 710.1L292.2 704.8M264.3 698.3L269.1 690.7L281.1 694.0L288.3 688.5M319.4 700.5L321.8 708.0L317.0 710.1"/>
<rect x="275" y="448.5" width="75.0" height="24.5" rx="5" fill="#add8e6" stroke="#000" stroke-width="1.6"/><text x="312.5" y="466.4" text-anchor="middle" font-size="16.3" fill="#000">SM0LPO</text>
<use href="#tw" x="232.7" y="469.5"/>
<use href="#tw" x="233.3" y="469.9"/>
<rect x="243" y="479.5" width="76.0" height="24.5" rx="5" fill="#add8e6" stroke="#000" stroke-width="1.6"/><text x="281.0" y="497.4" text-anchor="middle" font-size="16.3" fill="#000">SM6MVL</text>
<use href="#tw" x="200.6" y="499.6"/>
<rect x="130" y="548.8" width="61.7" height="25.0" rx="5" fill="#add8e6" stroke="#000" stroke-width="1.6"/><text x="160.8" y="566.9" text-anchor="middle" font-size="16.3" fill="#000">G8KHF</text>
<use href="#tw" x="86.7" y="570"/>
<use href="#tw" x="87.3" y="570.4"/>
<use href="#tw" x="119.6" y="607.6"/>
<rect x="162.6" y="586" width="57.4" height="24.5" rx="5" fill="#add8e6" stroke="#000" stroke-width="1.6"/><text x="191.3" y="603.9" text-anchor="middle" font-size="16.3" fill="#000">F4BYA</text>
<use href="#tw" x="167.6" y="631.7"/>
<rect x="323.5" y="521.8" width="43.0" height="24.1" rx="5" fill="#add8e6" stroke="#000" stroke-width="1.6"/><text x="345.0" y="539.4" text-anchor="middle" font-size="16.3" fill="#000">LY2J</text>
<use href="#tw" x="281.3" y="543"/>
<rect x="292" y="574.4" width="55.5" height="24.4" rx="5" fill="#add8e6" stroke="#000" stroke-width="1.6"/><text x="319.8" y="592.2" text-anchor="middle" font-size="16.3" fill="#000">SP9JP</text>
<rect x="210.8" y="611" width="72.0" height="24.5" rx="5" fill="#add8e6" stroke="#000" stroke-width="1.6"/><text x="246.8" y="628.9" text-anchor="middle" font-size="16.3" fill="#000">HB9ABY</text>
<use href="#tw" x="249" y="595.9"/>
<rect x="276.3" y="623.5" width="53.7" height="23.5" rx="5" fill="#add8e6" stroke="#000" stroke-width="1.6"/><text x="303.1" y="640.9" text-anchor="middle" font-size="16.3" fill="#000">HG5A</text>
<rect x="292.5" y="623.5" width="59.5" height="24.0" rx="5" fill="#add8e6" stroke="#000" stroke-width="1.6"/><text x="322.2" y="641.1" text-anchor="middle" font-size="16.3" fill="#000">HA3PT</text>
<use href="#tw" x="233.7" y="643.5"/>
<rect x="227.8" y="646.4" width="60.8" height="23.6" rx="5" fill="#add8e6" stroke="#000" stroke-width="1.6"/><text x="258.2" y="663.8" text-anchor="middle" font-size="16.3" fill="#000">IK4LZH</text>
<use href="#tw" x="250" y="643.5"/>
<use href="#tw" x="184.3" y="666"/>
<use href="#tw" x="297.8" y="689"/>
<rect x="453.8" y="507" width="46.2" height="25.6" rx="5" fill="#add8e6" stroke="#000" stroke-width="1.6"/><text x="476.9" y="525.4" text-anchor="middle" font-size="16.3" fill="#000">R5AJ</text>
<use href="#tw" x="411.2" y="528.2"/>
<rect x="501.7" y="534.7" width="71.8" height="25.3" rx="5" fill="#add8e6" stroke="#000" stroke-width="1.6"/><text x="537.6" y="553.0" text-anchor="middle" font-size="16.3" fill="#000">RA4FUT</text>
<rect x="421.5" y="548.8" width="49.9" height="25.0" rx="5" fill="#add8e6" stroke="#000" stroke-width="1.6"/><text x="446.4" y="566.9" text-anchor="middle" font-size="16.3" fill="#000">R3EK</text>
<use href="#tw" x="459.7" y="557"/>
<use href="#tw" x="378.2" y="569.4"/>
<rect x="421.5" y="610.5" width="84.3" height="25.0" rx="5" fill="#add8e6" stroke="#000" stroke-width="1.6"/><text x="463.6" y="628.6" text-anchor="middle" font-size="16.3" fill="#000">UR4QWW</text>
<rect x="421.5" y="635.5" width="51.5" height="24.0" rx="5" fill="#add8e6" stroke="#000" stroke-width="1.6"/><text x="447.2" y="653.1" text-anchor="middle" font-size="16.3" fill="#000">RO6K</text>
<rect x="436.7" y="645.8" width="69.9" height="24.9" rx="5" fill="#add8e6" stroke="#000" stroke-width="1.6"/><text x="471.6" y="663.9" text-anchor="middle" font-size="16.3" fill="#000">UD6AMI</text>
<use href="#tw" x="378.2" y="632.6"/>
<use href="#tw" x="378.8" y="654.7"/>
<rect x="340" y="667.8" width="55.8" height="25.0" rx="5" fill="#add8e6" stroke="#000" stroke-width="1.6"/><text x="367.9" y="685.9" text-anchor="middle" font-size="16.3" fill="#000">LZ1ZF</text>
<use href="#tw" x="395" y="666.4"/>
</svg>
<div class="a" style="left:1.5px;top:725.5px;width:109px;height:18px;background:rgba(255,255,255,.65);"></div>
<div class="t" style="left:2.2px;top:726px;color:#222;font-size:15px">Map © <u style="color:#1a9a9a">CartoDB</u></div>
<div class="a" style="left:814.9px;top:755.2px;width:2.6px;height:2.6px;background:#5a5a5a"></div><div class="a" style="left:810.7px;top:759.4px;width:2.6px;height:2.6px;background:#5a5a5a"></div><div class="a" style="left:814.9px;top:759.4px;width:2.6px;height:2.6px;background:#5a5a5a"></div><div class="a" style="left:806.5px;top:763.6px;width:2.6px;height:2.6px;background:#5a5a5a"></div><div class="a" style="left:810.7px;top:763.6px;width:2.6px;height:2.6px;background:#5a5a5a"></div><div class="a" style="left:814.9px;top:763.6px;width:2.6px;height:2.6px;background:#5a5a5a"></div>
<div class="a" style="left:823px;top:48.5px;width:740px;height:710.5px;background:#404040;border:1.5px solid #c06900"></div>
<div class="a" style="left:825px;top:50px;width:717px;height:26.5px;background:#202020;"></div>
<div class="a" style="left:825.5px;top:53.6px;width:63.5px;height:20.4px;background:#00bfff;"></div>
<div class="t " style="left:841px;top:54.4px;color:#1a1a1a">R0:0</div>
<div class="b " style="left:890.5px;top:52.5px;width:22.5px;height:22.5px;"><svg viewBox="1.5 1.5 21 21" fill="none" stroke="#fff" stroke-width="1.6" stroke-linecap="round" stroke-linejoin="round"><path fill="#fff" fill-rule="evenodd" stroke="none" d="M21.72,10.13L21.72,13.87L19.19,14.14L18.60,15.56L20.20,17.55L17.55,20.20L15.57,18.60L14.15,19.19L13.87,21.72L10.13,21.72L9.86,19.19L8.44,18.60L6.45,20.20L3.80,17.55L5.40,15.57L4.81,14.15L2.28,13.87L2.28,10.13L4.81,9.86L5.40,8.44L3.80,6.45L6.45,3.80L8.43,5.40L9.85,4.81L10.13,2.28L13.87,2.28L14.14,4.81L15.56,5.40L17.55,3.80L20.20,6.45L18.60,8.43L19.19,9.85Z M12 7.4A4.6 4.6 0 1 0 12 16.6A4.6 4.6 0 1 0 12 7.4Z"/></svg></div>
<div class="t " style="left:915px;top:54.4px;">FT8 Demodulator</div>
<div class="tri" style="left:829px;top:80.5px;border:7px solid transparent;border-left:15px solid #fff;border-right:0"></div>
<div class="t " style="left:846px;top:77.9px;">Settings</div>
<div class="or" style="left:825px;top:98px;width:717px;height:1.5px"></div>
<div class="tri" style="left:828.6px;top:100.6px;border:8px solid transparent;border-top:13.6px solid #fff;border-bottom:0"></div>
<div class="t " style="left:846px;top:98.4px;">Channel Spectrum</div>
<div class="hl" style="left:825px;top:120.3px;width:717px"></div>
<div class="a" style="left:832.2px;top:126.6px;width:710px;height:345.4px;background:#000;"></div>
<svg class="a" style="left:832px;top:126px" width="710" height="346" viewBox="832 126 710 346" font-family="Liberation Sans,sans-serif" font-size="15.2" fill="#d0d0d0">
<defs>
<filter id="wfn" x="0" y="0" width="100%" height="100%" color-interpolation-filters="sRGB"><feTurbulence type="fractalNoise" baseFrequency="0.14 0.42" numOctaves="2" seed="4"/><feColorMatrix values="1 0 0 0 0 1 0 0 0 0 1 0 0 0 0 0 0 0 0 1"/><feComponentTransfer><feFuncR type="table" tableValues="0.000 0.000 0.000 0.000 0.000 0.000 0.000 0.000 0.000 0.000 0.000 0.000 0.000 0.000 0.000 0.000 0.000 0.000 0.000 0.000 0.000 0.002 0.005 0.009 0.014 0.019 0.026 0.034 0.052 0.085 0.118 0.160 0.202 0.247 0.306 0.365 0.424 0.471 0.471 0.471 0.471"/><feFuncG type="table" tableValues="0.000 0.000 0.000 0.000 0.000 0.000 0.000 0.000 0.000 0.000 0.000 0.000 0.000 0.000 0.002 0.005 0.009 0.013 0.024 0.043 0.063 0.094 0.133 0.175 0.224 0.273 0.319 0.365 0.412 0.461 0.510 0.552 0.594 0.633 0.663 0.692 0.722 0.745 0.745 0.745 0.745"/><feFuncB type="table" tableValues="0.055 0.055 0.055 0.055 0.055 0.055 0.055 0.055 0.055 0.055 0.055 0.055 0.055 0.055 0.061 0.077 0.093 0.108 0.127 0.149 0.171 0.194 0.217 0.241 0.267 0.293 0.303 0.310 0.307 0.291 0.275 0.246 0.218 0.194 0.184 0.175 0.165 0.157 0.157 0.157 0.157"/></feComponentTransfer></filter><filter id="wfn2" x="0" y="0" width="100%" height="100%" color-interpolation-filters="sRGB"><feTurbulence type="fractalNoise" baseFrequency="0.14 0.42" numOctaves="2" seed="9"/><feColorMatrix values="1 0 0 0 0 1 0 0 0 0 1 0 0 0 0 0 0 0 0 1"/><feComponentTransfer><feFuncR type="table" tableValues="0.000 0.000 0.000 0.000 0.000 0.000 0.000 0.000 0.000 0.000 0.000 0.000 0.000 0.000 0.000 0.000 0.000 0.000 0.000 0.005 0.010 0.017 0.025 0.035 0.051 0.067 0.099 0.135 0.179 0.235 0.291 0.349 0.408 0.467 0.525 0.549 0.549 0.549 0.549 0.549 0.549"/><feFuncG type="table" tableValues="0.000 0.000 0.000 0.000 0.000 0.000 0.000 0.000 0.000 0.000 0.000 0.000 0.003 0.009 0.016 0.022 0.044 0.069 0.094 0.137 0.179 0.227 0.280 0.331 0.380 0.429 0.476 0.522 0.566 0.608 0.650 0.684 0.714 0.743 0.773 0.784 0.784 0.784 0.784 0.784 0.784"/><feFuncB type="table" tableValues="0.055 0.055 0.055 0.055 0.055 0.055 0.055 0.055 0.055 0.055 0.055 0.055 0.061 0.076 0.092 0.107 0.128 0.150 0.173 0.192 0.212 0.225 0.235 0.242 0.239 0.236 0.229 0.221 0.210 0.196 0.182 0.174 0.169 0.164 0.159 0.157 0.157 0.157 0.157 0.157 0.157"/></feComponentTransfer></filter>
<filter id="hsn" x="0" y="0" width="100%" height="100%" color-interpolation-filters="sRGB"><feTurbulence type="fractalNoise" baseFrequency="0.45 0.6" numOctaves="2" seed="3"/><feColorMatrix values="2.2 0 0 0 -0.95  0 1.2 0 0 0.2  -2.6 0 0 0 2.0  0 0 9 0 -4.25"/></filter>
<filter id="hsn2" x="0" y="0" width="100%" height="100%" color-interpolation-filters="sRGB"><feTurbulence type="fractalNoise" baseFrequency="0.5 0.7" numOctaves="2" seed="8"/><feColorMatrix values="0 0 0 0 0.35  0 0.8 0 0 0.2  0 0 0 0 0.95  0 0 8 0 -4.5"/></filter>
<filter id="bl" x="-5%" y="-5%" width="110%" height="110%"><feGaussianBlur stdDeviation="0.8 0.55"/></filter><filter id="gl" x="-5%" y="-5%" width="110%" height="110%"><feGaussianBlur stdDeviation="2.2 1.6"/></filter>
<linearGradient id="mt" x1="0" y1="0" x2="0" y2="1"><stop offset="0" stop-color="#fff"/><stop offset=".85" stop-color="#fff"/><stop offset="1" stop-color="#000"/></linearGradient><linearGradient id="mb" x1="0" y1="0" x2="0" y2="1"><stop offset="0" stop-color="#000"/><stop offset=".25" stop-color="#fff"/><stop offset="1" stop-color="#fff"/></linearGradient><mask id="mtm" maskUnits="userSpaceOnUse" x="917" y="289" width="625" height="37"><rect x="917" y="289" width="625" height="37" fill="url(#mt)"/></mask><mask id="mbm" maskUnits="userSpaceOnUse" x="917" y="436" width="625" height="22"><rect x="917" y="436" width="625" height="22" fill="url(#mb)"/></mask><linearGradient id="fade" x1="0" y1="0" x2="1" y2="0"><stop offset="0" stop-color="#02031a"/><stop offset="1" stop-color="#02031a" stop-opacity="0"/></linearGradient>
</defs>
<text x="862.5" y="148">CF:1.500k SP:3.000k</text>
<text x="858.5" y="197.6" text-anchor="end">-40</text><text x="858.5" y="237.2" text-anchor="end">-60</text>
<text x="863.1" y="258.4" text-anchor="middle" letter-spacing=".4">0.0</text>
<text x="921.2" y="258.4" text-anchor="middle" letter-spacing=".4">0.2</text>
<text x="979.3" y="258.4" text-anchor="middle" letter-spacing=".4">0.4</text>
<text x="1037.4" y="258.4" text-anchor="middle" letter-spacing=".4">0.6</text>
<text x="1095.5" y="258.4" text-anchor="middle" letter-spacing=".4">0.8</text>
<text x="1153.6" y="258.4" text-anchor="middle" letter-spacing=".4">1.0</text>
<text x="1211.7" y="258.4" text-anchor="middle" letter-spacing=".4">1.2</text>
<text x="1269.8" y="258.4" text-anchor="middle" letter-spacing=".4">1.4</text>
<text x="1327.9" y="258.4" text-anchor="middle" letter-spacing=".4">1.6</text>
<text x="1386.0" y="258.4" text-anchor="middle" letter-spacing=".4">1.8</text>
<text x="1444.1" y="258.4" text-anchor="middle" letter-spacing=".4">2.0</text>
<text x="1502.2" y="258.4" text-anchor="middle" letter-spacing=".4">2.2</text>
<text x="859" y="295.8" text-anchor="end">0</text>
<text x="859" y="333.4" text-anchor="end">5</text>
<text x="859" y="370" text-anchor="end">10</text>
<text x="859" y="406.5" text-anchor="end">15</text>
<text x="859" y="443" text-anchor="end">20</text>
<clipPath id="cd"><path d="M917 234L918 232.3L920 228.9L922 225.5L924 222.1L926 218.7L928 215.3L930 214.1L932 214.8L934 216.9L936 214.2L938 214.5L940 215.0L942 212.6L944 214.6L946 215.3L948 215.4L950 210.4L952 211.0L954 209.8L956 214.8L958 215.0L960 212.2L962 217.9L964 217.9L966 216.1L968 215.9L970 212.3L972 209.6L974 211.2L976 207.3L978 209.1L980 211.1L982 211.7L984 215.4L986 215.2L988 217.7L990 215.7L992 216.4L994 215.6L996 216.5L998 215.2L1000 214.1L1002 218.4L1004 218.3L1006 217.3L1008 216.5L1010 212.2L1012 210.0L1014 209.0L1016 207.7L1018 213.2L1020 212.5L1022 216.8L1024 214.0L1026 217.4L1028 216.7L1030 211.5L1032 212.7L1034 216.9L1036 214.3L1038 216.4L1040 212.2L1042 209.6L1044 213.0L1046 214.5L1048 212.2L1050 212.0L1052 213.5L1054 217.3L1056 216.2L1058 212.4L1060 213.2L1062 212.4L1064 212.2L1066 216.7L1068 213.1L1070 215.4L1072 214.8L1074 213.3L1076 216.7L1078 212.1L1080 213.3L1082 208.4L1084 209.1L1086 209.0L1088 211.1L1090 217.3L1092 217.4L1094 214.4L1096 217.9L1098 213.9L1100 214.9L1102 217.7L1104 214.6L1106 208.0L1108 210.5L1110 204.0L1112 206.1L1114 212.0L1116 212.4L1118 213.9L1120 212.5L1122 212.5L1124 215.4L1126 213.3L1128 215.4L1130 213.9L1132 214.4L1134 216.7L1136 212.5L1138 212.0L1140 213.0L1142 209.6L1144 210.5L1146 216.2L1148 216.3L1150 212.9L1152 212.6L1154 215.9L1156 217.1L1158 212.7L1160 217.2L1162 214.2L1164 210.1L1166 207.1L1168 205.1L1170 206.8L1172 214.8L1174 213.4L1176 216.3L1178 213.6L1180 217.1L1182 215.8L1184 214.1L1186 213.4L1188 213.3L1190 206.4L1192 204.9L1194 206.8L1196 211.1L1198 212.8L1200 214.3L1202 218.1L1204 213.8L1206 212.7L1208 214.2L1210 215.2L1212 212.9L1214 213.5L1216 213.8L1218 213.4L1220 209.5L1222 210.0L1224 214.0L1226 215.8L1228 215.2L1230 216.1L1232 215.4L1234 212.6L1236 211.9L1238 211.8L1240 217.1L1242 215.8L1244 215.4L1246 208.2L1248 210.5L1250 209.6L1252 212.4L1254 211.5L1256 217.4L1258 211.9L1260 214.7L1262 215.9L1264 212.4L1266 207.5L1268 204.0L1270 204.6L1272 208.6L1274 209.3L1276 215.9L1278 217.3L1280 217.2L1282 214.5L1284 215.9L1286 214.8L1288 211.6L1290 210.9L1292 210.5L1294 213.2L1296 215.1L1298 213.0L1300 216.4L1302 218.5L1304 213.9L1306 209.6L1308 204.7L1310 206.8L1312 208.7L1314 211.3L1316 217.6L1318 213.0L1320 217.0L1322 212.6L1324 214.2L1326 210.2L1328 206.0L1330 206.9L1332 207.5L1334 210.9L1336 211.9L1338 205.8L1340 204.3L1342 208.1L1344 212.9L1346 212.9L1348 212.6L1350 217.0L1352 215.5L1354 214.1L1356 214.0L1358 208.2L1360 208.2L1362 205.4L1364 208.8L1366 213.5L1368 216.9L1370 216.7L1372 213.8L1374 215.0L1376 213.5L1378 212.5L1380 214.7L1382 216.8L1384 216.9L1386 216.2L1388 217.7L1390 213.7L1392 213.1L1394 214.1L1396 211.6L1398 210.0L1400 210.3L1402 212.5L1404 213.0L1406 213.5L1408 217.6L1410 218.5L1412 215.3L1414 213.0L1416 212.8L1418 217.8L1420 212.8L1422 216.8L1424 215.9L1426 214.3L1428 217.2L1430 212.5L1432 211.9L1434 211.4L1436 206.9L1438 210.4L1440 208.1L1442 209.4L1444 211.0L1446 215.6L1448 214.5L1450 215.5L1452 215.6L1454 215.9L1456 215.8L1458 213.4L1460 209.9L1462 212.1L1464 211.1L1466 211.0L1468 214.2L1470 215.7L1472 212.5L1474 213.1L1476 212.1L1478 211.6L1480 208.3L1482 207.3L1484 209.7L1486 209.9L1488 215.0L1490 217.3L1492 212.4L1494 217.5L1496 216.4L1498 212.9L1500 214.9L1502 216.0L1504 217.8L1506 213.9L1508 213.9L1510 214.7L1512 213.5L1514 215.1L1516 213.3L1518 215.8L1520 213.8L1522 216.9L1524 217.5L1526 216.4L1528 216.9L1530 212.8L1532 216.0L1534 215.7L1536 215.7L1538 213.7L1540 216.1L1542 214.2L1542 233.0L1540 231.0L1538 228.0L1536 228.0L1534 228.0L1532 234.0L1530 233.0L1528 233.0L1526 233.0L1524 228.0L1522 234.0L1520 228.0L1518 228.0L1516 234.0L1514 228.0L1512 234.0L1510 233.0L1508 233.0L1506 234.0L1504 228.0L1502 234.0L1500 233.0L1498 233.0L1496 228.0L1494 233.0L1492 233.0L1490 233.0L1488 231.0L1486 231.0L1484 231.0L1482 231.0L1480 234.0L1478 234.0L1476 228.0L1474 234.0L1472 234.0L1470 233.0L1468 228.0L1466 228.0L1464 231.0L1462 234.0L1460 234.0L1458 233.0L1456 234.0L1454 234.0L1452 233.0L1450 228.0L1448 234.0L1446 234.0L1444 228.0L1442 233.0L1440 228.0L1438 234.0L1436 233.0L1434 234.0L1432 233.0L1430 228.0L1428 234.0L1426 231.0L1424 231.0L1422 231.0L1420 234.0L1418 234.0L1416 233.0L1414 231.0L1412 234.0L1410 234.0L1408 228.0L1406 231.0L1404 231.0L1402 234.0L1400 234.0L1398 234.0L1396 228.0L1394 234.0L1392 228.0L1390 231.0L1388 233.0L1386 231.0L1384 234.0L1382 228.0L1380 234.0L1378 234.0L1376 231.0L1374 231.0L1372 231.0L1370 233.0L1368 233.0L1366 234.0L1364 233.0L1362 233.0L1360 228.0L1358 234.0L1356 231.0L1354 234.0L1352 233.0L1350 234.0L1348 234.0L1346 233.0L1344 234.0L1342 228.0L1340 231.0L1338 231.0L1336 228.0L1334 228.0L1332 234.0L1330 234.0L1328 234.0L1326 234.0L1324 231.0L1322 233.0L1320 234.0L1318 228.0L1316 231.0L1314 233.0L1312 228.0L1310 228.0L1308 228.0L1306 231.0L1304 234.0L1302 234.0L1300 228.0L1298 234.0L1296 234.0L1294 233.0L1292 234.0L1290 231.0L1288 234.0L1286 234.0L1284 234.0L1282 234.0L1280 234.0L1278 234.0L1276 234.0L1274 228.0L1272 233.0L1270 233.0L1268 233.0L1266 233.0L1264 234.0L1262 234.0L1260 234.0L1258 228.0L1256 234.0L1254 234.0L1252 233.0L1250 231.0L1248 233.0L1246 234.0L1244 231.0L1242 231.0L1240 233.0L1238 234.0L1236 234.0L1234 234.0L1232 228.0L1230 234.0L1228 234.0L1226 233.0L1224 228.0L1222 228.0L1220 234.0L1218 228.0L1216 231.0L1214 234.0L1212 234.0L1210 234.0L1208 234.0L1206 234.0L1204 234.0L1202 234.0L1200 234.0L1198 231.0L1196 233.0L1194 231.0L1192 234.0L1190 231.0L1188 234.0L1186 234.0L1184 233.0L1182 233.0L1180 233.0L1178 234.0L1176 233.0L1174 234.0L1172 233.0L1170 234.0L1168 233.0L1166 234.0L1164 233.0L1162 233.0L1160 228.0L1158 228.0L1156 234.0L1154 228.0L1152 233.0L1150 234.0L1148 231.0L1146 233.0L1144 233.0L1142 234.0L1140 233.0L1138 228.0L1136 234.0L1134 228.0L1132 233.0L1130 234.0L1128 231.0L1126 231.0L1124 231.0L1122 234.0L1120 234.0L1118 234.0L1116 234.0L1114 234.0L1112 234.0L1110 234.0L1108 231.0L1106 234.0L1104 233.0L1102 228.0L1100 234.0L1098 234.0L1096 231.0L1094 233.0L1092 228.0L1090 228.0L1088 231.0L1086 234.0L1084 228.0L1082 228.0L1080 234.0L1078 231.0L1076 228.0L1074 228.0L1072 228.0L1070 233.0L1068 234.0L1066 234.0L1064 234.0L1062 228.0L1060 234.0L1058 233.0L1056 233.0L1054 228.0L1052 233.0L1050 234.0L1048 233.0L1046 234.0L1044 228.0L1042 233.0L1040 234.0L1038 233.0L1036 234.0L1034 233.0L1032 228.0L1030 234.0L1028 228.0L1026 233.0L1024 231.0L1022 233.0L1020 233.0L1018 234.0L1016 231.0L1014 234.0L1012 233.0L1010 228.0L1008 231.0L1006 231.0L1004 233.0L1002 233.0L1000 233.0L998 234.0L996 233.0L994 231.0L992 233.0L990 233.0L988 228.0L986 234.0L984 234.0L982 233.0L980 228.0L978 228.0L976 233.0L974 233.0L972 234.0L970 228.0L968 234.0L966 231.0L964 233.0L962 234.0L960 234.0L958 228.0L956 234.0L954 234.0L952 234.0L950 228.0L948 231.0L946 228.0L944 233.0L942 231.0L940 228.0L938 234.0L936 234.0L934 233.0L932 231.0L930 234.0L928 234.0L926 234.0L924 234.0L922 234.0L920 234.0L918 234.0Z"/></clipPath><clipPath id="cs"><path d="M918 234L918 220.7L920 216.0L922 214.0L924 209.6L926 203.6L928 205.5L930 203.0L932 203.8L934 197.2L936 204.0L938 202.3L940 202.8L942 200.9L944 203.5L946 197.9L948 197.4L950 195.5L952 194.9L954 196.2L956 195.0L958 202.4L960 200.9L962 205.6L964 201.6L966 206.3L968 200.2L970 197.6L972 198.1L974 193.8L976 183.3L978 194.3L980 193.3L982 203.8L984 201.4L986 204.7L988 202.1L990 208.7L992 204.2L994 202.3L996 204.1L998 201.9L1000 204.3L1002 205.8L1004 205.9L1006 206.1L1008 203.0L1010 200.0L1012 195.1L1014 184.6L1016 186.0L1018 188.7L1020 196.9L1022 202.7L1024 200.7L1026 202.3L1028 205.2L1030 199.9L1032 202.8L1034 203.7L1036 203.4L1038 195.9L1040 194.2L1042 191.8L1044 198.2L1046 196.2L1048 200.1L1050 199.0L1052 203.5L1054 203.2L1056 197.8L1058 200.2L1060 198.3L1062 198.6L1064 200.5L1066 201.3L1068 205.8L1070 207.4L1072 200.9L1074 201.8L1076 208.7L1078 201.0L1080 193.5L1082 187.9L1084 185.4L1086 186.1L1088 198.4L1090 204.5L1092 205.0L1094 208.4L1096 208.5L1098 207.9L1100 204.9L1102 207.6L1104 198.3L1106 185.1L1108 175.7L1110 175.5L1112 179.7L1114 186.0L1116 200.7L1118 206.8L1120 200.8L1122 204.8L1124 203.9L1126 202.6L1128 201.2L1130 202.9L1132 201.7L1134 200.5L1136 198.4L1138 191.6L1140 192.4L1142 187.5L1144 193.6L1146 203.0L1148 202.4L1150 203.3L1152 201.5L1154 204.0L1156 200.2L1158 205.3L1160 199.4L1162 194.5L1164 183.5L1166 182.2L1168 177.0L1170 184.8L1172 194.6L1174 207.0L1176 205.3L1178 201.9L1180 204.4L1182 208.7L1184 204.1L1186 202.2L1188 197.6L1190 185.4L1192 175.3L1194 171.4L1196 186.4L1198 189.5L1200 207.1L1202 206.3L1204 208.1L1206 207.6L1208 204.2L1210 204.3L1212 202.0L1214 205.8L1216 199.1L1218 193.1L1220 192.0L1222 192.7L1224 195.2L1226 193.9L1228 197.0L1230 200.2L1232 201.2L1234 198.5L1236 205.7L1238 201.7L1240 203.0L1242 200.3L1244 196.2L1246 188.8L1248 183.8L1250 182.3L1252 188.5L1254 191.2L1256 202.9L1258 197.9L1260 204.4L1262 201.0L1264 188.7L1266 173.5L1268 166.6L1270 161.4L1272 173.4L1274 186.0L1276 205.6L1278 201.6L1280 200.0L1282 203.4L1284 203.6L1286 191.6L1288 191.8L1290 183.4L1292 193.2L1294 200.2L1296 200.5L1298 200.7L1300 204.2L1302 201.7L1304 192.0L1306 181.2L1308 167.2L1310 170.2L1312 176.4L1314 188.8L1316 209.1L1318 208.9L1320 202.8L1322 201.9L1324 200.1L1326 189.6L1328 177.1L1330 171.5L1332 178.9L1334 185.5L1336 188.2L1338 177.4L1340 179.8L1342 182.8L1344 189.8L1346 206.1L1348 205.8L1350 204.2L1352 197.5L1354 201.5L1356 195.1L1358 182.5L1360 174.9L1362 176.3L1364 184.9L1366 193.2L1368 201.4L1370 201.8L1372 201.3L1374 205.5L1376 201.3L1378 206.0L1380 206.5L1382 203.9L1384 206.9L1386 203.7L1388 206.6L1390 203.5L1392 203.0L1394 205.6L1396 198.1L1398 194.9L1400 185.8L1402 195.8L1404 196.1L1406 199.8L1408 202.0L1410 208.1L1412 209.7L1414 208.1L1416 208.0L1418 208.1L1420 201.4L1422 209.2L1424 208.8L1426 208.5L1428 208.6L1430 204.3L1432 198.1L1434 191.9L1436 189.3L1438 180.7L1440 188.3L1442 188.9L1444 203.0L1446 205.8L1448 199.5L1450 204.8L1452 203.5L1454 200.6L1456 193.1L1458 195.0L1460 189.6L1462 191.6L1464 200.6L1466 196.7L1468 198.2L1470 200.2L1472 202.6L1474 201.8L1476 200.4L1478 189.9L1480 176.9L1482 177.7L1484 181.1L1486 188.6L1488 193.4L1490 200.1L1492 200.3L1494 205.0L1496 206.1L1498 203.3L1500 199.9L1502 203.5L1504 204.4L1506 206.5L1508 202.6L1510 193.3L1512 191.6L1514 195.5L1516 203.2L1518 204.6L1520 201.6L1522 201.7L1524 202.3L1526 207.0L1528 207.0L1530 204.0L1532 201.3L1534 192.9L1536 195.8L1538 201.8L1540 203.2L1542 204.1L1542 234Z"/></clipPath>
<g clip-path="url(#cs)"><rect x="905" y="156" width="637" height="78" filter="url(#hsn2)"/></g>
<g clip-path="url(#cd)"><rect x="905" y="156" width="637" height="78" fill="#2a4a90" opacity=".3"/><rect x="905" y="156" width="637" height="78" filter="url(#hsn)"/></g>
<path d="M862.5 233.6L918 233.6L918.0 233.2L919.5 231.9L921.7 232.3L923.3 230.0L925.3 228.9L926.6 227.3L928.1 224.0L929.4 218.5L931.1 230.3L933.4 226.2L935.4 228.9L937.6 222.2L939.2 228.1L941.5 217.1L944.0 226.2L946.0 233.0L948.3 221.0L950.6 220.8L952.5 208.6L954.2 212.2L956.6 220.4L958.0 223.8L960.5 230.2L962.5 231.1L964.0 219.4L966.4 229.4L967.8 231.5L969.8 222.2L971.0 223.3L973.0 222.1L975.0 205.8L977.1 205.1L979.2 232.6L980.9 232.0L983.1 230.6L984.9 231.6L986.6 225.8L988.2 226.8L990.4 222.6L992.8 231.6L995.0 224.6L997.5 228.9L999.2 220.1L1001.5 226.5L1002.8 226.1L1005.1 223.9L1007.4 224.0L1009.0 224.8L1011.5 227.2L1013.9 206.9L1015.2 199.5L1017.6 220.1L1018.9 221.4L1020.9 220.9L1022.6 232.6L1024.8 229.7L1026.5 216.9L1028.0 224.6L1029.7 227.9L1032.3 231.4L1034.4 222.5L1035.7 225.2L1037.3 230.0L1038.8 222.2L1041.4 215.0L1043.2 207.8L1045.0 220.2L1046.9 228.1L1048.5 218.1L1050.7 225.8L1052.0 229.4L1054.3 229.9L1056.7 218.5L1058.0 220.8L1059.2 226.8L1061.6 218.4L1063.6 224.6L1065.4 231.0L1067.7 229.2L1069.2 229.6L1070.5 224.2L1071.9 218.7L1073.7 220.6L1075.1 223.9L1077.7 232.6L1079.2 228.1L1080.5 231.5L1082.0 212.1L1084.0 199.3L1086.3 215.9L1088.8 232.2L1091.3 226.2L1092.9 220.8L1094.7 230.4L1097.3 231.5L1099.1 232.2L1100.3 223.8L1102.5 226.0L1103.9 231.2L1106.3 231.4L1108.6 197.4L1109.8 185.4L1111.4 195.2L1112.8 211.1L1114.0 222.7L1115.9 225.5L1117.4 225.1L1118.7 225.9L1120.4 216.5L1122.3 228.6L1124.4 227.6L1125.8 226.1L1127.1 226.3L1129.6 229.7L1131.1 227.8L1132.5 217.5L1134.0 225.4L1135.4 232.0L1137.3 221.7L1139.1 207.0L1140.7 204.8L1142.4 219.9L1144.4 229.3L1146.1 212.7L1148.6 228.9L1150.7 222.8L1152.4 216.6L1154.0 214.5L1155.5 221.4L1158.0 224.5L1160.2 230.7L1162.8 225.8L1165.1 203.6L1166.9 188.3L1168.3 198.6L1170.0 216.0L1172.3 217.0L1174.3 221.6L1176.8 229.1L1179.2 225.0L1181.1 220.4L1182.8 230.1L1185.0 229.9L1187.4 228.2L1189.5 219.9L1190.8 204.2L1193.0 183.9L1194.4 195.8L1196.5 202.8L1198.0 216.7L1200.6 218.7L1202.1 227.9L1203.8 228.0L1205.0 224.6L1206.8 230.4L1208.9 225.1L1210.4 232.3L1212.2 221.8L1213.6 225.0L1215.1 226.3L1217.5 222.9L1218.9 226.0L1221.5 204.7L1222.8 206.4L1224.7 222.3L1226.2 227.3L1228.8 223.2L1230.0 225.1L1231.3 221.0L1233.2 221.8L1234.7 232.2L1237.1 230.4L1239.6 222.2L1240.8 224.5L1242.7 232.9L1244.4 222.2L1246.0 219.5L1247.4 207.0L1248.8 197.1L1250.3 205.8L1251.7 217.5L1253.2 218.3L1254.8 226.1L1256.5 223.2L1258.3 232.1L1260.7 219.0L1263.0 225.9L1264.7 224.3L1267.1 191.1L1269.0 171.8L1270.4 185.8L1272.5 229.3L1274.4 223.6L1276.4 224.8L1278.9 232.9L1281.0 220.8L1283.4 219.9L1284.8 231.9L1287.1 221.9L1289.7 200.0L1292.2 216.8L1293.7 227.0L1295.2 213.3L1297.0 231.6L1299.4 229.6L1301.7 220.7L1304.1 215.4L1306.2 210.2L1307.5 196.4L1308.9 181.3L1311.4 204.5L1312.9 226.7L1315.0 230.7L1317.2 223.4L1318.5 222.9L1320.2 228.2L1322.4 231.1L1324.5 231.0L1325.8 223.0L1327.4 209.5L1329.0 194.4L1330.6 190.2L1332.7 209.8L1335.2 230.2L1337.3 201.5L1339.0 187.9L1341.1 205.2L1343.2 228.7L1344.6 224.8L1346.0 216.5L1347.3 223.0L1348.5 226.9L1350.7 217.6L1352.3 228.1L1354.9 224.9L1356.3 222.9L1358.8 206.8L1360.8 189.0L1363.1 206.0L1364.5 231.6L1366.6 228.2L1368.4 226.8L1370.8 231.9L1372.6 226.4L1374.2 225.6L1376.4 225.6L1377.9 222.6L1379.3 231.2L1380.8 222.4L1383.3 228.7L1384.7 230.3L1386.3 224.3L1388.4 230.7L1389.9 229.2L1391.4 218.6L1393.9 219.2L1395.5 226.7L1397.6 219.3L1398.9 208.6L1400.9 206.9L1402.6 221.0L1405.0 229.8L1406.8 221.5L1408.6 223.2L1411.1 228.6L1412.6 229.4L1414.5 222.6L1416.6 232.4L1418.3 222.3L1420.7 225.5L1422.8 218.5L1424.1 228.7L1426.6 217.7L1428.5 223.0L1429.9 229.5L1432.1 230.9L1433.4 224.5L1435.6 214.5L1437.3 199.2L1439.4 203.8L1441.9 219.5L1443.3 226.5L1444.7 227.4L1446.7 230.5L1448.3 231.1L1450.3 226.3L1452.0 227.3L1453.4 229.0L1455.4 222.7L1456.9 225.4L1459.4 207.2L1460.8 209.9L1462.8 223.6L1464.2 225.5L1466.5 224.5L1468.4 226.9L1470.8 219.5L1473.2 229.1L1475.2 232.2L1476.5 222.8L1479.1 212.1L1480.8 196.4L1483.2 198.3L1484.8 213.1L1486.4 226.8L1487.8 223.8L1489.9 224.8L1492.1 229.0L1494.6 230.7L1496.7 224.4L1498.7 223.2L1500.7 231.9L1502.1 223.3L1503.8 220.1L1505.0 228.0L1507.0 214.7L1508.7 224.2L1510.1 217.6L1512.2 204.6L1514.8 226.0L1516.1 224.8L1518.6 232.4L1521.1 226.9L1523.1 220.5L1524.5 223.2L1527.1 230.4L1529.1 230.7L1530.3 219.0L1532.1 227.7L1533.8 214.5L1536.0 213.8L1538.1 229.1L1539.7 227.0L1541.2 224.8" fill="none" stroke="#d2d23c" stroke-width="0.75" stroke-linejoin="round" opacity=".95"/>
<path d="M862.5 234.3V155.8H1542" fill="none" stroke="#9a9a9a" stroke-width="1"/><path d="M862.5 234.4H1542" fill="none" stroke="#77772a" stroke-width="1" opacity=".7"/>
<rect x="863" y="289" width="679" height="169" fill="#02031a"/>
<rect x="917" y="289" width="625" height="169" filter="url(#wfn)"/>
<rect x="917" y="289" width="625" height="37" filter="url(#wfn2)" opacity=".8" mask="url(#mtm)"/>
<rect x="917" y="436" width="625" height="22" filter="url(#wfn2)" opacity=".8" mask="url(#mbm)"/>
<rect x="917" y="289" width="14" height="169" fill="url(#fade)"/>
<use href="#sg" filter="url(#gl)" opacity=".75"/>
<g id="sg" fill="none" stroke-width="1.5"><g filter="url(#bl)">
<path stroke="#1f7a2a" opacity="0.8" d="M1041.1 335.4h8.2M1038.5 338.8h8.7M1038.5 339.8h9.0M1038.5 341.3h10.0M1038.5 342.6h10.6M1038.5 343.7h8.1M1032.0 345.1h8.3M1032.0 346.6h10.6M1032.0 347.6h8.5M1041.1 349.0h10.3M1037.2 350.1h8.9M1037.1 351.3h3.3M1034.6 351.3h8.3M1041.1 352.6h10.1M1041.1 355.2h8.9M1041.1 357.9h10.1M1035.9 360.5h9.6M1037.2 361.8h9.6M1034.6 364.5h10.7M1034.6 365.6h8.2M1037.1 366.8h5.0M1037.2 369.6h9.0M1039.7 370.6h3.8M1032.0 374.7h10.2M1034.6 377.1h9.2M1035.9 378.4h10.0M1033.3 379.5h10.9M1033.3 380.7h9.5M1032.0 381.9h8.4M1034.6 383.1h8.6M1034.6 384.5h9.3M1034.6 385.7h8.4M1034.6 386.9h10.3M1037.1 388.4h4.8M1034.6 388.4h9.8M1032.0 391.1h8.7M1037.1 392.3h3.2M1033.3 393.5h9.2M1037.2 396.2h10.8M1033.3 397.6h10.7M1038.5 404.0h8.4M1038.5 405.0h8.2M1038.5 407.7h9.5M1038.5 408.8h10.2M1038.5 410.1h9.4M1038.5 411.4h10.4M1038.5 412.6h8.8M1038.5 415.3h8.4M1038.5 416.5h9.6M1038.5 417.7h9.1M1039.7 419.0h4.6M1037.2 419.0h9.6M1037.2 420.1h8.1M1038.5 422.3h10.7M1034.5 425.1h4.3M1032.0 425.1h9.3M1037.2 426.5h8.2M1037.2 427.9h10.4M1037.2 429.1h9.2M1312.8 334.0h5.5M1312.8 335.0h5.4M1312.8 336.4h3.5M1312.8 338.9h5.8M1312.8 340.2h4.3M1312.8 342.4h3.1M1319.3 343.8h5.7M1319.3 345.1h4.0M1314.1 346.1h3.1M1312.8 347.3h5.6M1319.3 348.7h5.0M1320.6 349.9h3.8M1320.6 351.1h4.4M1311.5 353.4h5.9M1311.5 355.9h5.1M1311.5 357.0h4.3M1318.0 358.4h3.1M1316.7 359.8h5.9M1314.1 361.3h4.4M1320.6 362.5h4.2M1311.5 364.8h3.1M1311.5 365.9h4.4M1311.5 367.4h4.9M1311.5 368.5h3.6M1311.5 369.8h3.8M1320.6 371.0h5.8M1320.6 372.2h4.7M1312.8 373.7h4.3M1312.8 376.0h3.2M1318.0 377.2h4.8M1316.7 380.0h4.3M1312.8 382.5h3.3M1312.8 383.6h3.5M1318.0 384.7h4.9M1319.3 386.1h5.4M1319.3 387.1h3.1M1314.1 388.5h5.0M1316.7 389.6h4.6M1316.7 390.9h5.2M1316.7 392.3h3.3M1320.6 394.7h4.5M1320.6 395.9h4.7M1320.6 397.1h5.0M1320.6 398.1h3.9M1315.4 400.6h3.1M1311.5 402.1h4.1M1311.5 403.5h3.6M1318.0 404.9h4.6M1318.0 406.2h4.4M1316.7 409.8h3.2M1316.7 412.7h3.1M1316.7 414.0h5.6M1316.7 415.2h5.5M1316.7 416.6h4.2M1320.6 419.0h3.1M1319.3 420.1h4.3M1316.7 421.5h4.0M1316.7 422.9h3.8M1316.7 424.2h4.0M1316.7 425.5h4.7M1320.6 426.8h6.0M1315.4 428.8h4.0M1395.2 334.0h8.9M1395.2 336.4h10.3M1397.7 337.4h3.0M1395.2 337.4h8.0M1397.7 341.4h3.3M1395.2 341.4h8.3M1397.8 342.7h8.0M1390.0 345.3h9.7M1401.6 346.5h5.7M1399.1 346.5h10.7M1399.1 347.9h9.2M1399.1 349.3h10.3M1396.4 350.5h3.2M1393.9 350.5h8.2M1393.9 351.7h9.1M1393.9 352.9h10.5M1396.4 354.2h4.4M1397.8 355.4h9.6M1399.0 358.0h3.4M1396.5 358.0h8.4M1399.0 360.7h3.6M1396.5 360.7h8.6M1396.5 361.9h11.0M1395.2 363.0h8.6M1397.7 364.4h5.0M1392.6 365.9h9.8M1399.1 367.0h8.5M1399.1 368.0h9.0M1399.1 369.5h10.1M1397.8 374.6h11.0M1390.0 376.0h9.1M1392.6 377.2h10.6M1397.8 378.2h9.0M1401.6 382.0h3.3M1390.0 383.4h10.3M1396.4 384.7h4.5M1393.9 384.7h9.5M1392.6 386.9h10.5M1395.1 388.3h5.7M1392.6 389.3h8.3M1390.0 391.7h9.5M1392.6 394.2h9.1M1395.1 395.6h3.1M1395.1 397.0h3.7M1392.6 397.0h8.7M1395.1 398.4h4.9M1392.6 398.4h9.9M1399.1 399.5h10.0M1395.2 400.6h10.8M1393.9 401.8h10.6M1396.4 403.1h5.1M1393.9 403.1h10.1M1395.2 404.4h9.1M1396.5 407.0h8.4M1396.5 408.4h10.4M1399.0 409.6h5.7M1396.5 409.6h10.7M1399.0 410.8h5.6M1396.5 412.3h9.0M1397.8 413.5h9.0M1397.8 414.9h9.3M1390.0 417.4h9.1M1392.5 418.8h3.1M1390.0 418.8h8.1M1395.2 420.0h8.4M1393.9 421.1h8.2M1395.2 422.2h10.1M1392.6 423.3h8.5M1392.6 424.6h9.7M1396.4 425.8h5.1M1396.4 427.3h5.0M1393.9 427.3h10.0M1396.4 429.5h3.2M1393.9 429.5h8.2M1396.5 430.6h10.1M1429.9 335.2h10.8M1429.9 336.4h9.8M1426.0 337.8h8.4M1433.8 341.8h10.6M1436.3 343.0h3.7M1433.8 343.0h8.7M1433.8 344.3h8.6M1427.3 346.6h9.2M1429.9 349.3h10.4M1432.5 350.3h10.2M1435.1 354.6h9.4M1433.8 357.4h8.7M1433.8 358.6h10.6M1431.2 359.8h10.0M1429.9 361.0h9.6M1429.9 362.3h10.9M1431.2 363.6h10.5M1431.2 364.7h8.2M1431.2 366.2h10.2M1429.9 367.4h10.8M1429.9 368.4h9.6M1427.3 370.9h8.8M1435.1 372.2h9.1M1431.2 374.7h9.7M1428.6 375.9h8.7M1435.1 377.1h10.1M1435.1 378.2h10.9M1432.5 379.6h9.8M1432.5 380.9h11.0M1429.9 385.2h9.3M1435.0 386.3h3.2M1432.5 387.8h10.2M1431.1 391.7h5.3M1428.6 391.7h10.3M1432.5 392.8h9.0M1435.0 394.0h5.2M1432.5 394.0h10.2M1432.5 395.2h10.0M1431.2 396.6h8.7M1432.5 398.1h8.7M1429.9 400.4h10.0M1431.1 401.6h4.0M1428.6 401.6h9.0M1435.1 404.2h8.1M1437.6 405.4h5.5M1435.1 405.4h10.5M1435.1 406.9h10.7M1431.2 408.1h10.5M1428.6 410.5h8.1M1428.6 411.7h9.7M1437.6 412.9h3.6M1435.1 412.9h8.6M1433.8 414.3h10.9M1431.2 416.8h10.0M1428.6 417.9h9.1M1433.8 419.1h8.2M1436.3 420.2h5.8M1433.8 420.2h10.8M1431.1 423.0h3.6M1428.6 423.0h8.6M1437.6 424.2h3.4M1435.1 424.2h8.4M1435.1 425.3h8.5M1429.9 426.4h10.0M1507.3 334.0h5.2M1504.8 334.0h10.2M1507.3 335.5h4.9M1504.8 335.5h9.9M1499.5 339.1h5.7M1498.3 340.1h10.9M1499.6 341.2h9.6M1506.1 342.4h9.7M1499.5 347.6h5.1M1497.0 347.6h10.1M1506.0 348.8h5.4M1503.5 348.8h10.4M1503.5 350.0h9.8M1504.8 353.7h8.9M1499.6 354.8h9.6M1499.6 356.1h8.8M1504.8 357.1h8.9M1502.2 359.4h10.6M1504.8 361.8h10.7M1507.3 363.1h4.6M1504.8 363.1h9.6M1507.3 365.4h5.2M1504.8 366.7h9.4M1504.8 367.9h9.6M1504.8 369.2h10.4M1499.6 371.4h10.6M1502.2 373.6h8.7M1504.8 376.5h8.7M1498.3 377.9h9.2M1498.3 378.9h9.9M1497.0 380.2h8.7M1497.0 381.3h9.0M1502.2 382.7h10.0M1502.2 386.2h8.9M1502.2 387.3h8.1M1502.2 388.8h8.2M1502.2 389.9h8.4M1504.8 391.4h10.0M1500.8 393.7h4.7M1497.0 397.7h9.7M1499.5 398.8h5.1M1497.0 398.8h10.1M1504.8 402.9h10.5M1504.7 404.3h5.6M1502.2 404.3h10.6M1504.7 405.7h5.7M1502.2 405.7h10.7M1507.3 408.2h5.3M1504.8 410.4h9.8M1506.1 411.6h10.7M1504.7 416.2h5.8M1502.1 417.2h4.6M1499.6 417.2h9.6M1498.3 418.5h8.2M1500.8 420.0h5.6M1498.3 420.0h10.6M1503.4 422.4h5.8M1500.9 422.4h10.8M1502.2 425.1h9.2M1502.2 426.5h9.1M1502.2 429.0h8.2M1504.8 430.2h9.2M976.3 300.0h4.7M973.8 300.0h9.7M973.8 301.3h9.9M973.8 302.6h8.9M968.6 303.8h9.3M966.0 306.4h10.2M968.6 307.5h8.6M967.3 308.7h8.8M972.5 311.2h10.9M973.7 313.7h5.5M971.2 313.7h10.5M972.4 315.0h3.3M969.9 315.0h8.3M1017.4 290.0h4.2M1018.7 291.4h5.8M1018.7 292.5h3.8M1022.6 294.7h5.0M1022.6 296.1h4.8M1013.5 297.3h5.1M1013.5 298.7h4.9M1013.5 300.0h5.0M1020.0 302.7h5.5M1020.0 304.2h4.3M1296.9 290.0h9.3M1296.9 291.4h10.5M1296.9 292.5h10.6M1296.9 293.8h10.9M1295.6 295.2h9.5M1295.6 296.2h9.1M1300.7 297.4h4.1M1298.2 297.4h9.1M1293.0 298.8h9.8M1293.0 301.5h9.3M1293.0 303.0h8.9M1294.3 304.2h8.0M1303.3 305.5h4.6M1300.8 305.5h9.6M1300.8 306.5h8.2M1300.8 307.6h9.4M1300.8 308.7h10.1M1296.9 309.8h8.4M1295.6 310.9h8.0M1295.6 313.5h10.0M1302.1 314.5h8.6M1350.0 290.0h10.3M1357.8 291.4h10.1M1351.3 296.5h8.6M1352.6 300.4h9.7M1355.2 303.9h10.8M1355.2 304.9h10.6M1355.2 306.0h9.0M1355.2 307.2h10.8M1355.2 308.6h9.9M1355.2 309.7h10.7M1355.2 310.9h10.9M1433.7 290.0h3.2M1436.3 291.4h5.5M1437.6 292.5h5.9M1437.6 293.6h5.8M1437.6 295.0h3.1M1431.1 297.2h3.5M1431.1 298.6h3.2M1431.1 299.9h5.0M1435.0 301.3h3.7M1435.0 302.6h3.8M1433.7 305.2h3.3M1433.7 306.2h5.0M1433.7 307.4h3.1M1433.7 308.8h4.0M1433.7 310.3h4.9M1433.7 311.7h5.0M1487.1 290.0h8.8M1481.9 291.4h8.7M1484.4 292.5h3.9M1481.9 292.5h8.9M1481.9 293.6h10.2M1479.3 294.9h8.2M1487.1 297.4h9.0M1489.6 298.8h3.3M1487.1 301.3h10.5M1483.2 302.6h10.5M1483.2 303.7h10.4M1479.3 305.2h9.1M1479.3 306.2h10.3M1489.6 307.3h3.4M1487.1 307.3h8.4M1487.1 310.1h8.2M936.3 290.0h3.9M936.3 291.5h4.4M932.4 293.7h4.7M932.4 295.1h5.8M932.4 296.4h3.7M932.4 297.8h4.6M1042.6 446.0h3.1M1042.6 447.0h5.8M1038.7 449.3h4.1M1036.1 450.6h5.3M1036.1 451.7h3.0M1042.6 454.5h3.7M1042.6 455.9h5.2M1040.0 456.9h6.0M1108.8 446.0h9.2M1102.3 447.2h10.2M1110.1 450.1h8.4M1106.2 451.2h10.4M1106.2 452.6h8.4M1106.2 453.9h9.9M1108.8 457.3h10.8M1159.9 448.0h9.9M1165.0 449.4h3.2M1162.5 449.4h8.2M1162.5 450.8h10.9M1162.5 452.1h10.8M1159.9 453.5h9.2M1158.6 456.1h10.6M1293.0 447.3h10.8M1295.6 451.7h9.3M1295.6 453.0h8.1M1300.8 455.6h8.7M1296.9 457.1h8.3M1481.9 448.0h8.8M1479.3 449.5h11.0M1484.4 451.8h3.7M1481.9 451.8h8.7M1479.3 453.0h10.2M1480.6 455.4h8.8M1006.7 450.0h5.9M1006.7 451.4h5.1M1008.0 452.6h6.0M1001.5 455.1h5.8M1001.5 456.4h4.7M1001.5 457.7h4.7"/>
<path stroke="#3fae22" opacity="0.9" d="M948.7 334.0h4.7M946.2 334.0h9.7M947.5 335.2h10.2M944.9 336.3h9.3M947.4 338.8h4.0M944.9 338.8h9.0M947.4 340.0h5.2M948.8 341.0h10.9M952.6 342.0h5.9M950.1 342.0h10.9M947.5 343.5h10.8M950.0 344.8h5.2M947.5 344.8h10.2M948.7 346.0h3.4M946.2 347.4h8.4M952.6 348.5h5.3M944.8 349.6h5.8M947.5 350.9h9.9M950.0 352.3h4.1M947.5 352.3h9.1M951.3 356.0h5.4M948.8 356.0h10.4M943.5 357.3h3.5M941.0 357.3h8.5M951.3 359.8h4.3M948.8 359.8h9.3M946.1 361.3h4.4M946.1 362.6h3.9M943.6 362.6h8.9M942.3 364.0h9.9M944.8 365.1h5.4M942.3 365.1h10.4M952.6 366.4h4.7M950.1 366.4h9.7M950.1 367.4h8.2M944.8 370.1h4.3M948.7 371.3h3.9M946.2 371.3h8.9M946.2 372.8h10.1M947.4 374.1h5.4M950.0 376.6h4.4M947.5 376.6h9.4M950.0 377.8h5.6M947.5 377.8h10.6M948.8 378.9h8.9M951.3 381.3h5.3M951.3 382.6h4.9M948.8 382.6h9.9M946.1 383.8h4.5M943.6 383.8h9.5M943.6 385.1h9.5M946.1 386.2h5.1M943.6 386.2h10.1M946.1 387.6h3.9M943.6 387.6h8.9M943.6 389.1h9.0M943.5 390.3h4.4M941.0 390.3h9.4M941.0 391.4h8.7M951.3 392.5h3.6M951.3 393.9h4.3M951.3 395.2h5.8M948.8 395.2h10.8M948.7 397.5h5.4M946.2 398.6h8.1M950.1 401.4h10.1M950.1 402.6h10.2M952.6 404.0h3.1M950.1 404.0h8.1M943.5 405.0h4.1M947.4 406.3h5.6M944.9 406.3h10.6M944.9 407.4h8.4M951.3 408.9h5.2M948.8 408.9h10.2M946.2 409.9h9.3M952.6 412.4h5.0M950.1 412.4h10.0M950.1 413.8h10.7M952.6 414.9h4.8M950.1 414.9h9.8M944.8 416.0h4.6M942.3 416.0h9.6M948.8 417.3h9.0M951.3 418.5h3.9M943.5 419.7h5.5M941.0 419.7h10.5M943.5 421.0h5.3M941.0 421.0h10.3M943.5 422.2h4.7M943.5 423.2h4.0M943.5 424.4h4.6M941.0 424.4h9.6M943.5 426.9h4.4M943.5 428.2h4.1M941.0 428.2h9.1M943.5 429.3h5.1M941.0 429.3h10.1M941.0 430.5h9.6M1034.5 334.0h3.4M1043.6 335.4h3.2M1041.0 336.5h5.1M1041.0 338.8h3.7M1041.0 339.8h4.0M1041.0 341.3h5.0M1041.0 342.6h5.6M1041.0 343.7h3.1M1034.5 345.1h3.3M1034.5 346.6h5.6M1034.5 347.6h3.5M1043.6 349.0h5.3M1039.7 350.1h3.9M1043.6 352.6h5.1M1043.6 353.8h4.3M1043.6 355.2h3.9M1043.6 356.5h3.9M1043.6 357.9h5.1M1038.4 360.5h4.6M1037.1 363.3h5.4M1037.1 364.5h5.7M1037.1 365.6h3.2M1037.1 368.3h3.0M1034.5 372.0h5.2M1034.5 373.3h5.7M1034.5 374.7h5.2M1034.5 375.7h5.6M1037.1 377.1h4.2M1038.4 378.4h5.0M1035.8 379.5h5.9M1035.8 380.7h4.5M1034.5 381.9h3.4M1037.1 383.1h3.6M1037.1 384.5h4.3M1037.1 385.7h3.4M1037.1 386.9h5.3M1034.5 389.7h3.4M1034.5 391.1h3.7M1035.8 393.5h4.2M1041.0 394.8h5.8M1039.7 396.2h5.8M1035.8 397.6h5.7M1035.8 398.7h5.4M1041.0 399.8h5.3M1041.0 401.2h4.1M1041.0 404.0h3.4M1041.0 405.0h3.2M1041.0 406.2h3.6M1041.0 407.7h4.5M1041.0 408.8h5.2M1041.0 410.1h4.4M1041.0 411.4h5.4M1041.0 412.6h3.8M1041.0 414.0h4.6M1041.0 415.3h3.4M1041.0 416.5h4.6M1039.7 420.1h3.1M1041.0 421.2h3.4M1041.0 422.3h5.7M1041.0 423.8h5.9M1039.7 426.5h3.2M1039.7 427.9h5.4M1041.0 430.3h3.2M1036.0 402V423h7M1036.8 402V423M1108.8 334.0h8.3M1108.8 335.3h10.7M1103.6 338.1h8.5M1110.0 340.7h4.4M1106.1 342.9h3.2M1111.3 344.2h5.7M1108.8 344.2h10.7M1108.7 345.4h3.7M1106.2 345.4h8.7M1106.2 346.5h10.3M1106.2 347.9h9.4M1108.7 349.0h4.5M1106.2 349.0h9.5M1107.4 350.1h3.4M1104.9 350.1h8.4M1107.4 351.5h4.8M1104.9 352.7h9.1M1107.5 354.0h9.7M1101.0 355.1h8.8M1101.0 356.5h8.9M1101.0 357.5h10.7M1104.8 358.9h4.1M1102.3 358.9h9.1M1108.7 360.1h3.9M1106.2 360.1h8.9M1106.2 361.3h9.5M1106.2 362.4h9.7M1108.8 363.6h9.3M1108.8 364.9h10.1M1102.3 366.3h9.5M1108.7 367.4h5.7M1107.5 368.7h10.0M1110.1 369.9h8.3M1110.1 371.0h8.9M1107.5 372.3h8.3M1107.4 374.8h4.2M1104.9 374.8h9.2M1110.1 376.1h8.3M1112.6 377.3h3.0M1112.6 378.5h3.5M1103.6 381.0h10.7M1110.0 382.5h4.3M1107.5 382.5h9.3M1110.0 383.6h5.9M1107.5 383.6h10.9M1110.0 384.9h5.8M1107.5 386.2h8.1M1108.8 387.4h9.0M1111.3 388.6h3.6M1112.6 389.7h5.3M1110.1 389.7h10.3M1112.6 390.9h3.3M1110.0 392.0h5.9M1107.5 392.0h10.9M1104.9 393.5h8.4M1107.4 394.9h3.6M1108.7 396.1h5.7M1106.2 396.1h10.7M1106.2 397.2h9.2M1110.1 398.5h8.2M1108.7 399.8h4.1M1106.2 399.8h9.1M1108.7 401.0h3.3M1106.2 401.0h8.3M1107.4 402.4h3.1M1104.9 402.4h8.1M1110.1 403.9h9.6M1110.1 405.1h10.0M1106.1 406.2h5.0M1103.6 406.2h10.0M1103.5 407.5h5.5M1101.0 407.5h10.5M1101.0 408.8h9.8M1103.5 410.1h3.8M1101.0 411.1h10.5M1106.2 412.6h10.9M1106.2 414.0h10.1M1108.8 415.2h10.8M1108.8 416.3h8.3M1108.7 417.5h5.8M1107.4 418.9h3.6M1104.9 418.9h8.6M1107.4 420.3h3.9M1104.9 420.3h8.9M1107.4 421.8h5.9M1104.9 421.8h10.9M1102.3 422.8h10.7M1104.8 424.3h5.1M1108.7 425.7h5.9M1106.2 427.0h10.9M1108.7 428.5h5.8M1108.7 429.9h3.2M1103.5 431.4h4.5M1101.0 431.4h9.5M1101.0 432.7h10.6M1125.8 334.0h9.1M1133.6 335.5h10.0M1128.4 337.9h8.4M1129.7 339.2h9.8M1124.5 343.1h9.8M1124.5 344.5h8.0M1124.5 347.2h9.2M1124.5 348.4h9.2M1132.3 349.5h10.2M1128.4 350.6h9.7M1129.7 351.9h9.0M1125.8 356.7h9.9M1125.8 359.6h8.7M1131.0 362.2h8.3M1131.0 363.3h8.4M1124.5 365.5h9.3M1125.8 366.5h9.0M1125.8 369.3h8.9M1133.6 371.8h8.5M1133.6 373.1h8.9M1133.6 374.2h9.7M1128.4 375.6h9.6M1128.4 376.9h8.2M1128.4 378.3h10.2M1128.4 379.8h10.8M1128.4 380.9h8.2M1125.8 383.5h8.7M1129.7 384.6h9.3M1128.4 387.3h8.4M1131.0 388.8h9.2M1131.0 391.4h10.8M1133.6 392.4h9.2M1127.1 394.6h9.2M1127.1 395.7h10.0M1127.1 397.0h10.5M1133.6 398.2h11.0M1125.8 403.3h10.6M1125.8 404.3h9.7M1125.8 405.5h9.5M1125.8 406.6h10.6M1125.8 407.7h9.8M1132.3 408.7h8.3M1124.5 412.1h9.1M1124.5 413.2h9.6M1124.5 415.6h8.9M1124.5 419.4h9.9M1124.5 422.0h8.7M1124.5 423.4h10.0M1133.6 425.5h9.4M1192.3 334.0h8.5M1192.3 335.3h10.4M1194.9 337.7h8.9M1194.9 340.4h9.9M1194.9 342.6h9.8M1194.9 345.1h9.4M1193.6 346.3h8.5M1196.1 347.6h3.3M1193.6 347.6h8.3M1193.6 349.1h9.3M1202.6 350.1h3.9M1200.1 350.1h8.9M1200.1 351.6h8.0M1200.1 352.7h10.0M1200.1 354.0h8.7M1194.9 355.2h9.3M1193.6 356.6h8.7M1198.8 357.7h9.5M1200.1 359.0h9.2M1194.9 360.5h10.8M1191.0 365.9h8.7M1200.1 368.4h10.3M1200.1 369.4h8.2M1196.2 370.5h10.3M1191.0 373.4h9.6M1196.1 374.8h4.4M1193.6 374.8h9.4M1196.1 375.9h3.6M1193.6 375.9h8.6M1192.3 377.2h10.6M1191.0 379.9h9.5M1191.0 381.3h10.1M1197.5 382.5h8.0M1197.5 383.5h8.8M1198.8 386.1h10.3M1194.8 387.1h4.2M1191.0 390.8h10.4M1197.4 391.9h3.9M1194.9 391.9h8.9M1194.9 393.1h9.7M1197.4 394.5h6.0M1194.9 395.9h8.7M1194.9 397.0h9.6M1191.0 398.1h10.7M1193.5 399.3h5.3M1200.1 400.8h9.5M1198.8 402.0h9.1M1191.0 407.2h10.3M1191.0 410.1h10.0M1193.6 411.3h9.6M1200.1 412.7h8.1M1202.6 413.8h4.9M1200.1 413.8h9.9M1200.1 414.9h8.1M1198.8 417.5h9.8M1194.9 419.0h8.6M1196.2 420.0h9.2M1194.9 423.8h9.2M1200.0 425.0h3.0M1197.5 425.0h8.0M1191.0 426.2h9.9M1191.0 427.3h9.2M1197.5 428.4h9.0M1227.3 334.0h9.9M1227.3 336.7h10.8M1233.8 338.0h10.4M1226.0 339.2h9.2M1228.6 341.5h10.2M1228.6 342.6h9.3M1233.8 346.2h8.9M1233.8 347.6h9.7M1226.0 349.9h10.1M1226.0 351.4h10.3M1226.0 352.7h9.1M1228.6 354.0h10.6M1228.6 355.1h10.8M1228.6 356.3h8.9M1228.6 359.0h9.4M1226.0 360.1h10.7M1226.0 361.5h10.8M1226.0 363.9h8.4M1226.0 365.3h9.9M1226.0 366.7h9.1M1232.5 374.2h9.8M1232.5 375.7h9.0M1232.5 378.1h9.3M1232.5 379.3h9.7M1232.5 380.7h10.5M1231.2 381.8h9.4M1229.9 383.0h8.1M1235.1 384.2h9.6M1232.5 386.4h10.2M1231.2 390.6h10.9M1232.5 392.1h9.0M1226.0 393.5h9.3M1226.0 394.6h10.7M1226.0 395.8h11.0M1226.0 397.1h9.4M1231.2 399.8h8.5M1226.0 401.0h9.2M1229.9 402.2h9.8M1232.5 404.4h8.2M1232.5 405.6h8.2M1231.2 406.9h9.2M1233.8 408.2h8.9M1233.8 409.7h10.8M1231.2 411.0h9.9M1226.0 412.3h9.6M1226.0 413.6h10.4M1229.9 414.9h9.2M1226.0 418.7h9.3M1226.0 420.2h9.5M1226.0 421.6h9.1M1227.3 422.7h8.9M1227.3 425.4h9.8M1227.3 426.7h8.9M1227.3 427.8h9.9M1235.1 429.1h9.0M1235.1 430.3h9.8M1290.6 334.0h5.4M1288.1 334.0h10.4M1285.4 335.1h4.8M1282.9 335.1h9.8M1285.4 336.2h5.0M1282.9 336.2h10.0M1279.0 337.2h10.3M1279.0 338.7h10.9M1279.0 340.1h10.2M1285.5 341.2h9.1M1279.0 342.4h10.9M1288.0 343.8h3.4M1285.5 343.8h8.4M1288.0 345.0h5.8M1285.5 345.0h10.8M1285.4 346.5h4.7M1282.9 346.5h9.7M1282.9 347.6h10.2M1288.0 348.8h4.7M1285.5 348.8h9.7M1288.0 349.8h4.8M1285.5 349.8h9.8M1281.6 351.2h10.9M1284.1 352.2h3.7M1281.6 352.2h8.7M1281.6 353.2h8.4M1281.6 354.3h10.1M1282.8 355.3h3.2M1280.3 355.3h8.2M1282.8 356.5h4.2M1280.3 356.5h9.2M1280.3 357.7h8.1M1280.3 358.9h9.8M1279.0 361.4h9.0M1286.7 362.5h5.0M1284.2 362.5h10.0M1279.0 363.9h8.6M1279.0 365.3h10.6M1281.5 366.5h4.0M1279.0 366.5h9.0M1281.5 367.8h3.5M1279.0 367.8h8.5M1282.9 369.0h8.3M1282.9 370.4h9.6M1282.9 371.5h8.1M1285.4 373.0h5.9M1282.9 373.0h10.9M1281.5 375.6h4.2M1279.0 375.6h9.2M1281.5 376.7h5.4M1281.5 378.0h3.4M1281.5 379.4h4.2M1279.0 379.4h9.2M1281.5 380.6h4.0M1279.0 380.6h9.0M1281.5 382.1h4.6M1279.0 382.1h9.6M1285.4 383.6h3.4M1285.4 384.7h5.2M1282.9 384.7h10.2M1285.4 385.9h5.3M1282.9 385.9h10.3M1285.4 389.6h5.1M1282.9 390.9h8.6M1285.4 392.2h6.0M1282.9 393.7h10.2M1281.6 394.9h9.1M1280.3 396.2h9.9M1282.8 397.2h4.8M1280.3 397.2h9.8M1289.3 399.6h5.1M1284.1 402.0h4.7M1281.6 402.0h9.7M1286.7 403.0h5.5M1290.6 404.5h5.3M1286.8 405.9h8.3M1289.3 407.1h5.7M1286.8 407.1h10.7M1286.8 408.4h9.1M1284.1 409.4h4.1M1281.6 409.4h9.1M1288.0 410.8h3.4M1285.5 410.8h8.4M1288.0 412.0h3.1M1285.5 412.0h8.1M1288.0 413.3h4.7M1285.5 414.3h9.2M1285.5 415.4h8.3M1288.0 416.9h5.0M1285.5 416.9h10.0M1281.5 418.2h5.5M1279.0 418.2h10.5M1280.3 419.6h8.1M1280.3 420.9h9.7M1289.3 422.3h5.9M1289.3 423.4h5.8M1286.8 424.8h10.1M1282.8 429.1h4.3M1280.3 429.1h9.3M1285.4 431.2h5.4M1282.9 431.2h10.4M1282.8 432.6h5.6M1312.8 337.8h3.5M1312.8 341.3h4.0M1311.5 352.3h3.8M1311.5 354.6h4.5M1319.3 363.6h5.5M1312.8 374.7h4.2M1318.0 378.7h3.5M1316.7 381.2h5.8M1316.7 393.6h3.7M1315.4 399.4h4.0M1316.7 407.7h5.5M1316.7 408.8h4.8M1316.7 411.3h4.5M1320.6 417.9h5.5M1315.4 427.8h4.1M1397.7 335.3h3.6M1397.7 338.8h3.7M1397.7 339.9h4.5M1400.3 342.7h3.0M1400.3 343.9h3.6M1392.5 345.3h4.7M1401.6 347.9h4.2M1401.6 349.3h5.3M1396.4 351.7h4.1M1396.4 352.9h5.5M1400.3 355.4h4.6M1395.1 356.6h5.5M1399.0 359.5h4.7M1399.0 361.9h6.0M1397.7 363.0h3.6M1395.1 365.9h4.8M1401.6 367.0h3.5M1401.6 368.0h4.0M1401.6 369.5h5.1M1396.4 370.7h3.6M1396.4 371.9h5.3M1397.7 373.3h4.3M1400.3 374.6h6.0M1392.5 376.0h4.1M1395.1 377.2h5.6M1400.3 378.2h4.0M1400.3 379.5h3.8M1400.3 380.7h4.6M1392.5 383.4h5.3M1395.1 385.8h5.7M1395.1 386.9h5.5M1395.1 389.3h3.3M1392.5 391.7h4.5M1397.7 393.0h3.2M1395.1 394.2h4.1M1401.6 399.5h5.0M1397.7 400.6h5.8M1396.4 401.8h5.6M1397.7 404.4h4.1M1399.0 405.6h4.6M1399.0 407.0h3.4M1399.0 412.3h4.0M1400.3 413.5h4.0M1400.3 414.9h4.3M1400.3 416.0h5.8M1392.5 417.4h4.1M1396.4 421.1h3.2M1397.7 422.2h5.1M1395.1 423.3h3.5M1395.1 424.6h4.7M1396.4 428.4h4.3M1399.0 430.6h5.1M1394.0 414V426h7M1394.8 414V426M1432.4 334.0h4.4M1432.4 335.2h5.8M1432.4 336.4h4.8M1428.5 337.8h3.4M1433.7 338.9h4.2M1433.7 340.4h4.2M1436.3 341.8h5.6M1436.3 345.3h3.1M1429.8 346.6h4.2M1429.8 348.0h3.6M1432.4 349.3h5.4M1435.0 350.3h5.2M1437.6 351.8h5.0M1437.6 354.6h4.4M1436.3 357.4h3.7M1436.3 358.6h5.6M1433.7 359.8h5.0M1432.4 361.0h4.6M1432.4 362.3h5.9M1433.7 366.2h5.2M1432.4 367.4h5.8M1429.8 369.9h4.3M1429.8 370.9h3.8M1437.6 372.2h4.1M1433.7 373.5h3.8M1433.7 374.7h4.7M1431.1 375.9h3.7M1437.6 377.1h5.1M1437.6 378.2h5.9M1435.0 379.6h4.8M1435.0 380.9h6.0M1428.5 383.8h4.4M1432.4 385.2h4.3M1435.0 387.8h5.2M1428.5 388.8h5.4M1428.5 390.2h3.2M1435.0 392.8h4.0M1435.0 395.2h5.0M1433.7 396.6h3.7M1435.0 398.1h3.7M1432.4 399.2h3.6M1432.4 400.4h5.0M1435.0 403.0h4.2M1437.6 404.2h3.1M1437.6 406.9h5.7M1433.7 408.1h5.5M1431.1 409.5h4.4M1431.1 410.5h3.1M1431.1 411.7h4.7M1436.3 414.3h5.9M1433.7 415.6h4.5M1433.7 416.8h5.0M1431.1 417.9h4.1M1436.3 419.1h3.2M1431.1 421.6h4.1M1437.6 425.3h3.5M1432.4 426.4h5.0M1504.7 336.6h5.7M1499.5 338.0h3.9M1500.8 340.1h5.9M1502.1 341.2h4.6M1508.6 342.4h4.7M1503.4 343.4h4.0M1499.5 344.9h3.7M1499.5 346.1h5.0M1506.0 350.0h4.8M1503.4 351.1h3.8M1508.6 352.4h4.4M1507.3 353.7h3.9M1504.7 358.2h4.7M1504.7 359.4h5.6M1507.3 361.8h5.7M1507.3 364.3h3.2M1507.3 366.7h4.4M1507.3 367.9h4.6M1507.3 369.2h5.4M1500.8 370.2h3.5M1502.1 371.4h5.6M1500.8 372.6h5.8M1504.7 375.0h5.0M1507.3 376.5h3.7M1500.8 377.9h4.2M1500.8 378.9h4.9M1499.5 380.2h3.7M1499.5 381.3h4.0M1500.8 383.9h3.4M1504.7 386.2h3.9M1504.7 387.3h3.1M1504.7 388.8h3.2M1504.7 389.9h3.4M1507.3 391.4h5.0M1507.3 392.6h3.8M1508.6 394.8h4.3M1508.6 396.2h4.3M1499.5 397.7h4.7M1504.7 400.2h3.3M1504.7 401.5h4.8M1507.3 402.9h5.5M1504.7 406.8h3.5M1507.3 409.3h3.6M1507.3 410.4h4.8M1499.5 413.7h4.5M1504.7 415.1h3.3M1500.8 418.5h3.2M1500.8 421.3h5.4M1502.1 423.6h3.6M1504.7 425.1h4.2M1504.7 426.5h4.1M1500.8 428.0h5.9M1504.7 429.0h3.2M976.3 301.3h4.9M971.1 303.8h4.3M968.5 306.4h5.2M971.1 307.5h3.6M972.4 310.1h4.1M975.0 311.2h5.9M976.3 312.6h5.3M1016.1 293.6h4.3M1013.5 301.4h5.8M1108.7 290.0h3.3M1108.7 291.4h3.6M1106.2 291.4h8.6M1106.2 292.8h8.6M1108.7 294.1h3.2M1106.2 295.2h8.8M1103.5 297.7h4.0M1101.0 299.1h9.9M1103.5 300.3h5.6M1101.0 300.3h10.6M1167.6 291.0h3.7M1165.1 291.0h8.7M1166.3 292.2h5.7M1163.8 292.2h10.7M1165.1 293.4h8.7M1167.6 295.7h5.9M1165.1 295.7h10.9M1167.6 297.1h5.4M1165.1 297.1h10.4M1167.6 298.4h4.5M1165.1 298.4h9.5M1167.6 299.6h5.7M1161.2 300.8h9.4M1161.1 302.2h5.7M1163.7 305.1h3.4M1158.5 306.2h4.0M1156.0 306.2h9.0M1156.0 307.4h9.6M1158.5 308.8h4.6M1156.0 308.8h9.6M1162.5 310.2h10.5M1156.0 312.8h9.8M1158.5 314.2h4.0M1156.0 314.2h9.0M1159.8 316.5h4.7M1157.3 316.5h9.7M1166.3 317.9h3.8M1163.8 317.9h8.8M1161.1 319.3h3.8M1161.1 320.4h5.7M1158.6 320.4h10.7M1158.5 322.6h5.3M1156.0 322.6h10.3M1166.3 323.9h5.4M1163.8 323.9h10.4M1166.3 325.0h4.9M1163.8 325.0h9.9M1269.5 290.0h9.0M1269.5 291.3h8.5M1272.1 293.7h9.8M1269.5 295.0h9.1M1272.0 296.3h5.3M1269.5 296.3h10.3M1272.0 297.4h5.3M1269.5 297.4h10.3M1265.6 298.6h8.8M1265.6 299.8h9.8M1265.6 300.9h10.2M1272.1 302.1h8.7M1272.1 303.1h10.5M1265.6 304.6h10.3M1268.1 306.1h3.4M1265.6 306.1h8.4M1265.6 307.2h10.8M1265.6 308.3h10.5M1266.9 309.3h8.6M1268.2 310.4h8.5M1266.9 311.5h8.8M1273.3 312.8h5.9M1270.8 312.8h10.9M1270.8 313.8h9.6M1273.3 315.3h5.7M1270.8 315.3h10.7M1266.9 316.7h8.6M1299.4 290.0h4.3M1299.4 291.4h5.5M1299.4 292.5h5.6M1299.4 293.8h5.9M1298.1 295.2h4.5M1295.5 298.8h4.8M1295.5 301.5h4.3M1295.5 303.0h3.9M1296.8 304.2h3.0M1303.3 306.5h3.2M1303.3 307.6h4.4M1303.3 308.7h5.1M1298.1 312.0h3.9M1298.1 313.5h5.0M1304.6 314.5h3.6M1304.6 315.7h5.8M1334.5 290.0h10.4M1334.5 291.4h9.8M1334.5 292.9h8.5M1338.3 295.2h5.9M1335.8 295.2h10.9M1331.8 296.2h4.6M1331.8 297.4h5.1M1331.8 298.7h5.8M1329.3 300.1h9.5M1329.3 302.9h10.3M1329.3 304.4h10.9M1331.9 305.5h9.0M1334.4 306.9h5.7M1331.9 306.9h10.7M1338.3 309.4h4.5M1335.8 309.4h9.5M1334.4 310.7h4.4M1333.1 312.0h5.8M1330.6 312.0h10.8M1333.1 313.4h5.1M1330.6 313.4h10.1M1330.6 314.5h10.4M1329.3 315.6h8.4M1352.5 290.0h5.3M1360.3 291.4h5.1M1352.5 292.7h5.2M1352.5 294.0h4.3M1353.8 296.5h3.6M1355.1 297.8h5.1M1355.1 300.4h4.7M1357.7 301.5h4.8M1357.7 303.9h5.8M1357.7 304.9h5.6M1357.7 306.0h4.0M1357.7 307.2h5.8M1357.7 308.6h4.9M1357.7 309.7h5.7M1357.7 310.9h5.9M1437.6 296.2h5.4M1432.4 303.8h3.9M1489.6 290.0h3.8M1484.4 291.4h3.7M1484.4 293.6h5.2M1489.6 297.4h4.0M1489.6 300.0h5.6M1489.6 301.3h5.5M1485.7 302.6h5.5M1485.7 303.7h5.4M1481.8 305.2h4.1M1481.8 306.2h5.3M1484.4 308.6h3.7M1489.6 310.1h3.2M936.3 292.5h4.3M932.4 298.8h3.3M1034.8 448.2h3.3M1034.8 453.1h5.6M1111.3 446.0h4.2M1104.8 447.2h5.2M1112.6 448.7h5.0M1112.6 450.1h3.4M1108.7 451.2h5.4M1108.7 452.6h3.4M1108.7 453.9h4.9M1108.7 454.9h5.3M1111.3 455.9h3.6M1111.3 457.3h5.8M1162.4 448.0h4.9M1165.0 450.8h5.9M1162.4 453.5h4.2M1162.4 454.8h5.6M1161.1 456.1h5.6M1165.0 457.4h4.5M1283.1 448.2h9.2M1279.2 449.3h10.7M1275.3 450.4h10.8M1281.8 451.7h8.6M1283.1 453.2h9.5M1283.1 455.6h8.6M1277.9 456.9h9.2M1304.6 446.0h3.7M1295.5 447.3h5.8M1300.7 448.8h6.0M1300.7 450.2h5.5M1298.1 451.7h4.3M1298.1 453.0h3.1M1303.3 454.3h3.9M1303.3 455.6h3.7M1299.4 457.1h3.3M1331.8 446.0h4.9M1329.3 446.0h9.9M1333.2 447.4h8.7M1330.6 448.9h9.8M1329.3 450.1h8.2M1329.3 452.5h8.3M1331.9 455.4h8.8M1334.4 456.8h5.5M1331.9 456.8h10.5M1484.4 448.0h3.8M1481.8 449.5h6.0M1481.8 450.6h3.6M1481.8 453.0h5.2M1481.8 454.2h4.8M1483.1 455.4h3.8M1484.4 456.7h3.3M1008.0 453.9h3.4"/>
<path stroke="#c4d41a" opacity="0.95" d="M950.0 335.2h5.2M947.4 336.3h4.3M947.4 337.3h3.2M951.3 341.0h5.9M950.0 343.5h5.8M948.7 347.4h3.4M950.0 350.9h4.9M952.6 353.4h5.9M946.1 354.6h3.1M943.5 358.7h5.1M944.8 364.0h4.9M952.6 367.4h3.2M948.7 368.7h5.4M948.7 372.8h5.1M952.6 375.5h3.9M951.3 378.9h3.9M951.3 380.3h4.9M946.1 385.1h4.5M946.1 389.1h4.0M943.5 391.4h3.7M951.3 396.5h4.6M948.7 398.6h3.1M948.7 400.1h3.6M952.6 401.4h5.1M952.6 402.6h5.2M947.4 407.4h3.4M948.7 409.9h4.3M943.5 411.1h4.2M952.6 413.8h5.7M951.3 417.3h4.0M943.5 425.7h5.0M943.5 430.5h4.6M1041.0 337.6h3.1M1043.6 359.1h5.6M1039.7 361.8h4.6M1039.7 369.6h4.0M1041.0 402.7h5.7M1041.0 417.7h4.1M1039.7 429.1h4.2M1111.3 334.0h3.3M1111.3 335.3h5.7M1106.1 336.8h3.5M1106.1 338.1h3.5M1103.5 339.6h4.0M1106.1 341.8h4.4M1108.7 346.5h5.3M1108.7 347.9h4.4M1107.4 352.7h4.1M1110.0 354.0h4.7M1103.5 355.1h3.8M1103.5 356.5h3.9M1103.5 357.5h5.7M1108.7 361.3h4.5M1108.7 362.4h4.7M1111.3 363.6h4.3M1111.3 364.9h5.1M1104.8 366.3h4.5M1110.0 368.7h5.0M1112.6 369.9h3.3M1112.6 371.0h3.9M1110.0 372.3h3.3M1107.4 373.5h3.2M1112.6 376.1h3.3M1104.8 380.0h4.1M1106.1 381.0h5.7M1110.0 386.2h3.1M1111.3 387.4h4.0M1107.4 393.5h3.4M1108.7 397.2h4.2M1112.6 398.5h3.2M1112.6 403.9h4.6M1112.6 405.1h5.0M1103.5 408.8h4.8M1103.5 411.1h5.5M1108.7 412.6h5.9M1108.7 414.0h5.1M1111.3 415.2h5.8M1111.3 416.3h3.3M1104.8 422.8h5.7M1108.7 427.0h5.9M1103.5 432.7h5.6M1105.0 412V426h7M1105.8 412V426M1128.3 334.0h4.1M1136.1 335.5h5.0M1130.9 337.9h3.4M1132.2 340.3h3.2M1127.0 343.1h4.8M1127.0 344.5h3.0M1127.0 346.0h5.6M1132.2 351.9h4.0M1134.8 354.6h4.8M1128.3 356.7h4.9M1133.5 362.2h3.3M1133.5 363.3h3.4M1133.5 364.3h3.2M1128.3 367.9h3.4M1130.9 376.9h3.2M1130.9 379.8h5.8M1134.8 386.0h4.6M1130.9 387.3h3.4M1132.2 393.6h4.9M1129.6 394.6h4.2M1129.6 395.7h5.0M1136.1 399.6h5.3M1136.1 400.8h3.2M1128.3 403.3h5.6M1128.3 405.5h4.5M1128.3 406.6h5.6M1128.3 407.7h4.8M1134.8 408.7h3.3M1127.0 413.2h4.6M1128.3 416.9h3.6M1127.0 418.1h5.5M1127.0 419.4h4.9M1127.0 420.6h3.7M1127.0 423.4h5.0M1194.8 334.0h3.5M1194.8 335.3h5.4M1197.4 336.6h3.8M1197.4 337.7h3.9M1197.4 340.4h4.9M1197.4 341.4h5.2M1197.4 342.6h4.8M1197.4 343.9h3.3M1197.4 345.1h4.4M1196.1 346.3h3.5M1196.1 349.1h4.3M1202.6 351.6h3.0M1202.6 352.7h5.0M1202.6 354.0h3.7M1197.4 355.2h4.3M1202.6 359.0h4.2M1197.4 360.5h5.8M1193.5 363.4h3.3M1193.5 364.5h4.2M1193.5 365.9h3.7M1200.0 367.2h4.4M1202.6 368.4h5.3M1202.6 369.4h3.2M1196.1 372.0h3.8M1193.5 373.4h4.6M1194.8 377.2h5.6M1193.5 378.5h5.8M1193.5 379.9h4.5M1193.5 381.3h5.1M1200.0 382.5h3.0M1200.0 383.5h3.8M1201.3 384.8h4.6M1201.3 386.1h5.3M1194.8 388.2h3.9M1202.6 389.4h3.2M1193.5 390.8h5.4M1197.4 393.1h4.7M1197.4 395.9h3.7M1197.4 397.0h4.6M1193.5 398.1h5.7M1202.6 400.8h4.5M1201.3 402.0h4.1M1193.5 404.6h5.0M1193.5 405.8h4.6M1193.5 407.2h5.3M1193.5 408.6h5.8M1193.5 410.1h5.0M1196.1 411.3h4.6M1202.6 414.9h3.1M1201.3 416.3h3.1M1201.3 417.5h4.8M1197.4 419.0h3.6M1198.7 420.0h4.2M1201.3 421.2h5.0M1197.4 422.3h5.6M1197.4 423.8h4.2M1193.5 426.2h4.9M1200.0 428.4h4.0M1200.0 429.8h3.2M1195.0 410V427h7M1195.8 410V427M1228.5 339.2h4.2M1236.3 346.2h3.9M1236.3 347.6h4.7M1228.5 352.7h4.1M1231.1 356.3h3.9M1228.5 362.8h5.1M1235.0 369.0h5.9M1235.0 374.2h4.8M1235.0 380.7h5.5M1233.7 381.8h4.4M1235.0 385.3h4.4M1235.0 387.8h4.6M1233.7 390.6h5.9M1233.7 406.9h4.2M1228.5 420.2h4.5M1237.6 429.1h4.0M1281.5 337.2h5.3M1281.5 338.7h5.9M1281.5 340.1h5.2M1288.0 341.2h4.1M1281.5 342.4h5.9M1285.4 347.6h5.2M1284.1 351.2h5.9M1284.1 353.2h3.4M1284.1 354.3h5.1M1282.8 357.7h3.1M1282.8 358.9h4.8M1282.8 360.3h4.3M1281.5 361.4h4.0M1281.5 363.9h3.6M1281.5 365.3h5.6M1285.4 369.0h3.3M1285.4 370.4h4.6M1285.4 371.5h3.1M1285.4 374.3h5.0M1285.4 387.2h3.7M1285.4 388.6h4.0M1285.4 390.9h3.6M1285.4 393.7h5.2M1284.1 394.9h4.1M1282.8 396.2h4.9M1282.8 398.4h3.2M1288.0 400.7h5.0M1289.3 405.9h3.3M1289.3 408.4h4.1M1288.0 414.3h4.2M1288.0 415.4h3.3M1282.8 419.6h3.1M1282.8 420.9h4.7M1289.3 424.8h5.1M1289.3 426.3h3.1M1289.3 427.6h5.3M1285.4 430.2h4.9M1283.0 410V428h7M1283.8 410V428M1397.7 334.0h3.9M1397.7 336.4h5.3M1392.5 390.4h5.4M1399.0 408.4h5.4M1397.7 420.0h3.4M1436.3 344.3h3.6M1437.6 353.2h4.8M1437.6 356.0h4.5M1433.7 363.6h5.5M1433.7 364.7h3.2M1432.4 368.4h4.6M1431.1 382.4h4.9M1502.1 354.8h4.6M1502.1 356.1h3.8M1507.3 357.1h3.9M1504.7 360.7h5.4M1504.7 373.6h3.7M1504.7 382.7h5.0M1500.8 384.9h4.9M1508.6 411.6h5.7M1508.6 412.7h4.2M1507.3 430.2h4.2M976.3 302.6h3.9M968.5 305.2h3.6M969.8 308.7h3.8M1108.7 292.8h3.6M1108.7 295.2h3.8M1111.3 296.6h4.3M1103.5 299.1h4.9M1105.0 291V301h7M1105.8 291V301M1167.6 293.4h3.7M1167.6 294.6h4.1M1163.7 300.8h4.4M1163.7 303.7h3.8M1158.5 307.4h4.6M1165.0 310.2h5.5M1165.0 311.6h4.9M1158.5 312.8h4.8M1158.5 315.4h5.6M1158.5 321.5h4.1M1160.0 312V326h7M1160.8 312V326M1272.0 290.0h4.0M1272.0 291.3h3.5M1272.0 292.6h5.8M1274.6 293.7h4.8M1272.0 295.0h4.1M1268.1 299.8h4.8M1268.1 300.9h5.2M1274.6 302.1h3.7M1274.6 303.1h5.5M1268.1 304.6h5.3M1268.1 307.2h5.8M1268.1 308.3h5.5M1269.4 309.3h3.6M1270.7 310.4h3.5M1269.4 311.5h3.8M1273.3 313.8h4.6M1270.7 317.9h5.1M1267.0 304V318h7M1267.8 304V318M1298.1 296.2h4.1M1298.1 300.1h5.9M1299.4 309.8h3.4M1298.1 310.9h3.0M1337.0 290.0h5.4M1337.0 291.4h4.8M1337.0 292.9h3.5M1335.7 293.9h4.9M1331.8 300.1h4.5M1331.8 301.5h5.7M1331.8 302.9h5.3M1331.8 304.4h5.9M1334.4 305.5h4.0M1335.7 308.2h4.1M1333.1 314.5h5.4M1331.8 315.6h3.4M1332.0 302V316h7M1332.8 302V316M1352.5 295.4h4.5M1355.1 299.1h5.5M1357.7 302.9h5.2M1481.8 294.9h3.2M1489.6 296.0h3.2M1489.6 311.3h4.4M1165.0 452.1h5.8M1285.6 448.2h4.2M1285.6 453.2h4.5M1335.7 447.4h3.7M1333.1 448.9h4.8M1331.8 450.1h3.2M1331.8 451.5h5.9M1331.8 452.5h3.3M1334.4 453.9h5.4M1334.4 455.4h3.8"/>
<path stroke="#f0a010" opacity="1" d="M1130.9 336.5h5.5M1132.2 339.2h4.8M1127.0 347.2h4.2M1127.0 348.4h4.2M1134.8 349.5h5.2M1130.9 350.6h4.7M1134.8 353.3h4.0M1132.2 358.2h3.2M1128.3 359.6h3.7M1127.0 365.5h4.3M1128.3 366.5h4.0M1128.3 369.3h3.9M1128.3 370.4h3.3M1136.1 371.8h3.5M1136.1 373.1h3.9M1136.1 374.2h4.7M1130.9 375.6h4.6M1130.9 378.3h5.2M1130.9 380.9h3.2M1128.3 382.4h5.6M1128.3 383.5h3.7M1132.2 384.6h4.3M1133.5 388.8h4.2M1133.5 390.3h5.6M1133.5 391.4h5.8M1129.6 397.0h5.5M1136.1 398.2h6.0M1128.3 404.3h4.7M1130.9 409.8h4.7M1127.0 410.9h4.2M1127.0 412.1h4.1M1130.9 414.3h5.7M1127.0 415.6h3.9M1127.0 422.0h3.7M1136.1 424.5h3.9M1197.4 339.1h3.6M1196.1 356.6h3.7M1201.3 357.7h4.5M1193.5 362.0h5.6M1198.7 370.5h5.3M1201.3 403.2h3.4M1202.6 412.7h3.1M1193.5 427.3h4.2M1229.8 335.2h4.1M1229.8 336.7h5.8M1236.3 338.0h5.4M1231.1 340.4h5.1M1231.1 341.5h5.2M1231.1 342.6h4.3M1236.3 348.7h4.3M1228.5 349.9h5.1M1231.1 354.0h5.6M1231.1 355.1h5.8M1228.5 363.9h3.4M1237.6 373.0h5.3M1235.0 377.0h4.7M1232.4 383.0h3.1M1233.7 398.5h5.3M1232.4 402.2h4.8M1235.0 403.4h3.0M1235.0 404.4h3.2M1236.3 408.2h3.9M1236.3 409.7h5.8M1228.5 413.6h5.4M1232.4 414.9h4.2M1228.5 418.7h4.3M1228.5 421.6h4.1M1229.8 424.1h5.2M1229.8 425.4h4.8M1237.6 430.3h4.8M1268.1 298.6h3.8M1269.4 316.7h3.6M1277.8 450.4h5.8M1285.6 454.4h3.4M1285.6 455.6h3.6M1280.4 456.9h4.2"/>
<path stroke="#e8400a" opacity="1" d="M1132.2 341.6h5.4M1128.3 355.7h5.5M1128.3 360.8h5.7M1136.1 392.4h4.2M1128.3 402.0h4.1M1136.1 425.5h4.4M1229.8 334.0h4.9M1236.3 343.8h4.4M1236.3 345.0h4.4M1228.5 351.4h5.3M1231.1 357.8h5.1M1231.1 359.0h4.4M1228.5 360.1h5.7M1228.5 361.5h5.8M1228.5 365.3h4.9M1228.5 366.7h4.1M1236.3 368.0h5.1M1237.6 370.2h3.8M1237.6 371.7h4.7M1235.0 375.7h4.0M1235.0 378.1h4.3M1235.0 379.3h4.7M1237.6 384.2h4.6M1235.0 386.4h5.2M1233.7 389.2h4.1M1235.0 392.1h4.0M1228.5 393.5h4.3M1228.5 394.6h5.7M1228.5 395.8h6.0M1228.5 397.1h4.4M1233.7 399.8h3.5M1228.5 401.0h4.2M1235.0 405.6h3.2M1233.7 411.0h4.9M1228.5 412.3h4.6M1231.1 416.0h5.9M1236.3 417.3h4.3M1229.8 422.7h3.9M1229.8 426.7h3.9M1229.8 427.8h4.9M1230.0 406V428h7M1230.8 406V428M1276.5 447.0h5.5M1281.7 449.3h5.7M1284.3 451.7h3.6"/>
</g></g>
<path d="M862.5 458.5V288.5H1542M862.5 458.5H1542" fill="none" stroke="#8a8a8a" stroke-width="1"/>
</svg>
<div class="b " style="left:835.5px;top:477.8px;width:28.5px;height:27.2px;"><svg viewBox="0 0 24 24" fill="none" stroke="#fff" stroke-width="1.6" stroke-linecap="round" stroke-linejoin="round"><rect x="4" y="4" width="16" height="16" rx="1.8" stroke-width="1.7"/><path d="M9.3 4V20M14.7 4V20M4 9.3H20M4 14.7H20" stroke-width="1.7"/></svg></div>
<div class="a" style="left:871.45px;top:481.95px;width:20.6px;height:20.6px;border-radius:50%;background:linear-gradient(150deg,#cbcbcb,#b9b9b9 55%,#a9a9a9);border:1px solid #d0d0d0;box-shadow:1.2px 1.8px 2px .6px #2b2b2b,0 0 0 1px #383838"></div>
<div class="a" style="left:874.7px;top:491.7px;width:7.6px;height:7.6px;border-radius:50%;background:#d6d6d6"></div>
<div class="a" style="left:876.1px;top:493.1px;width:4.8px;height:4.8px;border-radius:50%;background:radial-gradient(#a6a6a6 20%,#858585 75%)"></div>
<div class="b " style="left:898.75px;top:477.8px;width:28.3px;height:27.2px;"><svg viewBox="0 0 24 24" fill="none" stroke="#fff" stroke-width="1.6" stroke-linecap="round" stroke-linejoin="round"><path d="M4.8 5.2L17 17.4" stroke-width="1.6"/><path d="M16 16L19.8 19.8" stroke-width="2.8"/><path d="M3.4 20.8L5.2 16.6L19.6 2.8Q21.6 3.2 21.2 5.4L8 19Q6 20.6 3.4 20.8Z" fill="#fff" stroke="none"/></svg></div>
<div class="b " style="left:930.5px;top:477.8px;width:33.2px;height:27.2px;"><div class="a" style="left:5.5px;top:3.5px;width:21px;height:20px;background:#000"></div></div>
<div class="b on" style="left:966.5px;top:477.3px;width:29.7px;height:28.2px;"><svg viewBox="0 0 24 24" fill="none" stroke="#fff" stroke-width="1.6" stroke-linecap="round" stroke-linejoin="round"><path d="M3 20.5Q7 20.5 8.8 13.5Q10.6 3.5 12 3.5Q13.4 3.5 15.2 13.5Q17 20.5 21 20.5Z" fill="#5fe000" stroke="#1e90ff" stroke-width="1.5"/><path d="M3.5 20.6H20.5" stroke="#3fd000" stroke-width="1.6"/></svg></div>
<div class="b " style="left:999.5px;top:477.8px;width:28.4px;height:27.2px;"><svg viewBox="0 0 24 24" fill="none" stroke="#fff" stroke-width="1.6" stroke-linecap="round" stroke-linejoin="round"><path d="M12 20.5V10" stroke-width="3" stroke-linecap="butt"/><path d="M6.5 12.5L12 6.5L17.5 12.5Z" fill="#fff" stroke="none"/><path d="M4.5 8Q12 0.5 19.5 8" stroke-width="1.8"/></svg></div>
<div class="a" style="left:1035.3px;top:481.95px;width:20.6px;height:20.6px;border-radius:50%;background:linear-gradient(150deg,#cbcbcb,#b9b9b9 55%,#a9a9a9);border:1px solid #d0d0d0;box-shadow:1.2px 1.8px 2px .6px #2b2b2b,0 0 0 1px #383838"></div>
<div class="a" style="left:1038.5px;top:491.7px;width:7.6px;height:7.6px;border-radius:50%;background:#d6d6d6"></div>
<div class="a" style="left:1039.9px;top:493.1px;width:4.8px;height:4.8px;border-radius:50%;background:radial-gradient(#a6a6a6 20%,#858585 75%)"></div>
<div class="a" style="left:1066.95px;top:481.95px;width:20.6px;height:20.6px;border-radius:50%;background:linear-gradient(150deg,#cbcbcb,#b9b9b9 55%,#a9a9a9);border:1px solid #d0d0d0;box-shadow:1.2px 1.8px 2px .6px #2b2b2b,0 0 0 1px #383838"></div>
<div class="a" style="left:1070.8px;top:492.2px;width:7.6px;height:7.6px;border-radius:50%;background:#d6d6d6"></div>
<div class="a" style="left:1072.2px;top:493.6px;width:4.8px;height:4.8px;border-radius:50%;background:radial-gradient(#a6a6a6 20%,#858585 75%)"></div>
<div class="a" style="left:1098.7px;top:481.95px;width:20.6px;height:20.6px;border-radius:50%;background:linear-gradient(150deg,#cbcbcb,#b9b9b9 55%,#a9a9a9);border:1px solid #d0d0d0;box-shadow:1.2px 1.8px 2px .6px #2b2b2b,0 0 0 1px #383838"></div>
<div class="a" style="left:1104.8px;top:483.9px;width:7.6px;height:7.6px;border-radius:50%;background:#d6d6d6"></div>
<div class="a" style="left:1106.2px;top:485.3px;width:4.8px;height:4.8px;border-radius:50%;background:radial-gradient(#a6a6a6 20%,#858585 75%)"></div>
<div class="b on" style="left:1134.75px;top:477.3px;width:29.4px;height:28.2px;"><svg viewBox="0 0 24 24" fill="none" stroke="#fff" stroke-width="1.6" stroke-linecap="round" stroke-linejoin="round"><path d="M3 20.5Q7 20.5 8.8 13.5Q10.6 3.5 12 3.5Q13.4 3.5 15.2 13.5Q17 20.5 21 20.5" stroke-width="1.1"/><path d="M3.5 20.6H20.5" stroke-width="1.1"/></svg></div>
<div class="b " style="left:1166.9px;top:477.8px;width:28.1px;height:27.2px;"><svg viewBox="0 0 24 24" fill="none" stroke="#fff" stroke-width="1.6" stroke-linecap="round" stroke-linejoin="round"><path d="M3 20.8Q7 20.5 8.8 13.5Q10.6 3.5 12 3.5Q13.4 3.5 15.2 13.5Q17 20.5 21 20.8Z" fill="#fff" stroke="none"/></svg></div>
<div class="b " style="left:1196.9px;top:477.8px;width:28.1px;height:27.2px;"><svg viewBox="0 0 24 24" fill="none" stroke="#fff" stroke-width="1.6" stroke-linecap="round" stroke-linejoin="round"><defs><linearGradient id="pg" x1="0" y1="0" x2="0" y2="1"><stop offset="0" stop-color="#fff"/><stop offset="1" stop-color="#444"/></linearGradient></defs><path d="M3 20.5Q7 20.5 8.8 13.5Q10.6 3.5 12 3.5Q13.4 3.5 15.2 13.5Q17 20.5 21 20.5Z" fill="url(#pg)" stroke="#ddd" stroke-width="1"/><path d="M3.5 20.6H20.5" stroke="#ddd" stroke-width="1.2"/></svg></div>
<div class="a" style="left:1231.6000000000001px;top:481.95px;width:20.6px;height:20.6px;border-radius:50%;background:linear-gradient(150deg,#cbcbcb,#b9b9b9 55%,#a9a9a9);border:1px solid #d0d0d0;box-shadow:1.2px 1.8px 2px .6px #2b2b2b,0 0 0 1px #383838"></div>
<div class="a" style="left:1237.7px;top:483.9px;width:7.6px;height:7.6px;border-radius:50%;background:#d6d6d6"></div>
<div class="a" style="left:1239.1px;top:485.3px;width:4.8px;height:4.8px;border-radius:50%;background:radial-gradient(#a6a6a6 20%,#858585 75%)"></div>
<div class="cb" style="left:1257.75px;top:479.4px;width:99.2px;height:25.6px"><span>Angel</span><i></i></div>
<div class="b on" style="left:1361px;top:477.3px;width:29px;height:28.2px;"><svg viewBox="0 0 24 24" fill="none" stroke="#fff" stroke-width="1.6" stroke-linecap="round" stroke-linejoin="round"><rect x="3.5" y="3.5" width="17" height="17" stroke-width="1.5" stroke-linejoin="miter"/><path d="M12 3.5V20.5M3.5 8.5H12M12 16.5H20.5" stroke-width="1.2"/><path d="M7.8 18V9" stroke-width="2" stroke-linecap="butt"/><path d="M4.8 10.5L7.8 5.5L10.8 10.5Z" fill="#fff" stroke="none"/><path d="M16.2 6V14" stroke-width="2" stroke-linecap="butt"/><path d="M13.2 13L16.2 18.5L19.2 13Z" fill="#fff" stroke="none"/></svg></div>
<div class="b on" style="left:1391.9px;top:477.3px;width:29.1px;height:28.2px;"><svg viewBox="0 0 24 24" fill="none" stroke="#fff" stroke-width="1.6" stroke-linecap="round" stroke-linejoin="round"><defs><linearGradient id="gb" x1="0" y1="0" x2="1" y2="0"><stop offset="0" stop-color="#0a8a0a"/><stop offset=".5" stop-color="#ffd800"/><stop offset="1" stop-color="#0a8a0a"/></linearGradient></defs><rect x="5.5" y="3.5" width="13" height="17" fill="url(#gb)" stroke="none"/></svg></div>
<div class="b " style="left:1422.75px;top:477.8px;width:27.9px;height:27.2px;"><svg viewBox="0 0 24 24" fill="none" stroke="#fff" stroke-width="1.6" stroke-linecap="round" stroke-linejoin="round"><defs><linearGradient id="g3" x1="0" y1="0" x2="1" y2="0"><stop offset="0" stop-color="#0a8a0a"/><stop offset=".5" stop-color="#ffd800"/><stop offset="1" stop-color="#0a8a0a"/></linearGradient></defs><path d="M7.5 11.5H16.5L20.8 21.5H3.2Z" fill="url(#g3)" stroke="none"/><text x="12" y="11.4" text-anchor="middle" font-family="Liberation Sans,sans-serif" font-weight="bold" font-size="12" fill="#fff" stroke="none">3D</text></svg></div>
<div class="cb" style="left:1453.5px;top:478.5px;width:100px;height:26.5px"><span>Outline</span><i style="right:8.5px"></i></div>
<div class="cb" style="left:835.5px;top:509.75px;width:86.5px;height:25.5px"><span>Han</span><i></i></div>
<div class="cb" style="left:926px;top:509.75px;width:61px;height:25.5px"><span>1k</span><i></i></div>
<div class="sp" style="left:990.25px;top:510.6px;width:74.5px;height:25px"><span style="right:27px">0</span><em></em></div>
<div class="cb" style="left:1068.75px;top:509.75px;width:61px;height:25.5px"><span>No</span><i></i></div>
<div class="cb" style="left:1132.75px;top:509.75px;width:68.2px;height:25.5px"><span>1</span><i></i></div>
<div class="b " style="left:1214px;top:509.75px;width:27.9px;height:28px;"><div class="t" style="left:7.5px;top:5.5px">A</div></div>
<div class="sp" style="left:1245.6px;top:510.6px;width:61px;height:25.4px"><span style="right:25px">-21</span><em></em></div>
<div class="sp" style="left:1310.6px;top:510.6px;width:55px;height:25.4px"><span style="right:24px">40</span><em></em></div>
<div class="cb" style="left:1368.75px;top:509.75px;width:67.5px;height:26.5px"><span>20</span><i></i></div>
<div class="b " style="left:1440.25px;top:509.75px;width:28.3px;height:27.8px;"><svg viewBox="0 0 24 24" fill="none" stroke="#fff" stroke-width="1.6" stroke-linecap="round" stroke-linejoin="round"><path d="M5.5 19Q6.5 5.5 18.5 5" stroke-width="2"/></svg></div>
<div class="b " style="left:1479.4px;top:509.75px;width:27.9px;height:27.8px;"><svg viewBox="0 0 24 24" fill="none" stroke="#fff" stroke-width="1.6" stroke-linecap="round" stroke-linejoin="round"><path d="M8.6 5.5V18.5M15.4 5.5V18.5" stroke-width="3.6" stroke-linecap="butt"/></svg></div>
<div class="b " style="left:1510.25px;top:509.75px;width:28.3px;height:27.8px;"><svg viewBox="0 0 24 24" fill="none" stroke="#fff" stroke-width="1.6" stroke-linecap="round" stroke-linejoin="round"><path d="M4.5 3.5H16.5L20 7V20.5H4.5Z" stroke-width="1.7" stroke-linejoin="miter"/><path d="M7.5 3.5V9H16V3.5" stroke-width="1.5" fill="#fff"/><rect x="13" y="4.6" width="1.6" height="3" fill="#4c4c4c" stroke="none"/><rect x="7.5" y="13" width="9.5" height="7.5" fill="#777" stroke="#fff" stroke-width="1"/></svg></div>
<div class="b " style="left:1540.6px;top:509.75px;width:28px;height:27.8px;"></div>
<div class="or" style="left:825px;top:546.5px;width:717px;height:1.5px"></div>
<div class="tri" style="left:828.6px;top:549.4px;border:8px solid transparent;border-top:13.6px solid #fff;border-bottom:0"></div>
<div class="t " style="left:846px;top:546.9px;">FT8 details</div>
<div class="hl" style="left:825px;top:569.5px;width:717px"></div>
<div class="b " style="left:831.75px;top:577px;width:33.3px;height:28px;"><svg viewBox="-2 -2 28 28" fill="none" stroke="#fff" stroke-width="1.6" stroke-linecap="round" stroke-linejoin="round"><path d="M9.6 3.4A5 5 0 0 0 4 10.2A5 5 0 0 0 10.4 12.6L17.6 20.4A1.9 1.9 0 0 0 20.4 17.8L12.9 10.3A5 5 0 0 0 12.3 5.6L9.4 8.5L7.4 6.5Z" stroke-width="1.8"/></svg></div>
<div class="t " style="left:869px;top:582.0px;">Dec</div>
<div class="t " style="left:909.6px;top:582.0px;word-spacing:-1.2px">7 / 92</div>
<div class="b " style="left:989.7px;top:577px;width:33.6px;height:28px;"><svg viewBox="0 0 24 24" fill="none" stroke="#fff" stroke-width="1.6" stroke-linecap="round" stroke-linejoin="round"><path d="M12 7V13" stroke-width="3" stroke-linecap="butt"/><path d="M7.6 12L12 17.2L16.4 12Z" fill="#fff" stroke="none"/></svg></div>
<div class="b " style="left:1028px;top:577px;width:28.2px;height:28px;"><svg viewBox="0 0 24 24" fill="none" stroke="#fff" stroke-width="1.6" stroke-linecap="round" stroke-linejoin="round"><path d="M3.5 4H20.5L13.8 12V20.5H10.2V12Z" fill="#fff" stroke="#fff" stroke-width="1"/></svg></div>
<div class="t " style="left:1060.3px;top:582.0px;">Band</div>
<div class="cb" style="left:1100.8px;top:578.6px;width:99.5px;height:25.6px"><span>20m</span><i></i></div>
<div class="b " style="left:1205px;top:577px;width:33px;height:28px;"><svg viewBox="0 0 24 24" fill="none" stroke="#fff" stroke-width="1.6" stroke-linecap="round" stroke-linejoin="round"><path d="M2.5 12H15" stroke-width="3.2" stroke-linecap="butt"/><path d="M14 6.5L21.5 12L14 17.5Z" fill="#fff" stroke="none"/></svg></div>
<div class="a" style="left:832px;top:610px;width:710px;height:113.5px;background:#191919;"></div>
<div class="a" style="left:832px;top:610px;width:710px;height:113.5px;overflow:hidden">
<div class="a mono" style="left:0px;top:18.5px;width:64.5px;height:19px;border-right:1px solid #353535;border-bottom:1px solid #353535;font-size:15.5px;line-height:18px;padding:0 4px 0 4.6px;text-align:left;white-space:pre;overflow:hidden">121145</div>
<div class="a mono" style="left:64.5px;top:18.5px;width:38.7px;height:19px;border-right:1px solid #353535;border-bottom:1px solid #353535;font-size:15.5px;line-height:18px;padding:0 4px 0 4.6px;text-align:right;white-space:pre;overflow:hidden">1</div>
<div class="a mono" style="left:103.0px;top:18.5px;width:20.5px;height:19px;border-right:1px solid #353535;border-bottom:1px solid #353535;font-size:15.5px;line-height:18px;padding:0 4px 0 2.6px;text-align:left;white-space:pre;overflow:hidden">0</div>
<div class="a mono" style="left:123.5px;top:18.5px;width:36.5px;height:19px;border-right:1px solid #353535;border-bottom:1px solid #353535;font-size:15.5px;line-height:18px;padding:0 4px 0 4.6px;text-align:left;white-space:pre;overflow:hidden">159</div>
<div class="a mono" style="left:160.0px;top:18.5px;width:45.5px;height:19px;border-right:1px solid #353535;border-bottom:1px solid #353535;font-size:15.5px;line-height:18px;padding:0 4px 0 4.6px;text-align:right;white-space:pre;overflow:hidden">-0.3</div>
<div class="a mono" style="left:205.5px;top:18.5px;width:46px;height:19px;border-right:1px solid #353535;border-bottom:1px solid #353535;font-size:15.5px;line-height:18px;padding:0 4px 0 4.6px;text-align:right;white-space:pre;overflow:hidden">2190</div>
<div class="a mono" style="left:251.5px;top:18.5px;width:40px;height:19px;border-right:1px solid #353535;border-bottom:1px solid #353535;font-size:15.5px;line-height:18px;padding:0 4px 0 4.6px;text-align:right;white-space:pre;overflow:hidden">-23</div>
<div class="a mono" style="left:291.5px;top:18.5px;width:137px;height:19px;border-right:1px solid #353535;border-bottom:1px solid #353535;font-size:15.5px;line-height:18px;padding:0 4px 0 4.6px;text-align:left;white-space:pre;overflow:hidden">KI7QI</div>
<div class="a mono" style="left:428.5px;top:18.5px;width:111px;height:19px;border-right:1px solid #353535;border-bottom:1px solid #353535;font-size:15.5px;line-height:18px;padding:0 4px 0 4.6px;text-align:left;white-space:pre;overflow:hidden">RA4FUT</div>
<div class="a mono" style="left:539.5px;top:18.5px;width:54.299999999999955px;height:19px;border-right:1px solid #353535;border-bottom:1px solid #353535;font-size:15.5px;line-height:18px;padding:0 4px 0 4.6px;text-align:left;white-space:pre;overflow:hidden">LO23</div>
<div class="a mono" style="left:593.8px;top:18.5px;width:179.70000000000005px;height:19px;border-right:1px solid #353535;border-bottom:1px solid #353535;font-size:15.5px;line-height:18px;padding:0 4px 0 4.6px;text-align:left;white-space:pre;overflow:hidden">EU Russia</div>
<div class="a mono" style="left:0px;top:37.5px;width:64.5px;height:19px;border-right:1px solid #353535;border-bottom:1px solid #353535;font-size:15.5px;line-height:18px;padding:0 4px 0 4.6px;text-align:left;white-space:pre;overflow:hidden">121145</div>
<div class="a mono" style="left:64.5px;top:37.5px;width:38.7px;height:19px;border-right:1px solid #353535;border-bottom:1px solid #353535;font-size:15.5px;line-height:18px;padding:0 4px 0 4.6px;text-align:right;white-space:pre;overflow:hidden">1</div>
<div class="a mono" style="left:103.0px;top:37.5px;width:20.5px;height:19px;border-right:1px solid #353535;border-bottom:1px solid #353535;font-size:15.5px;line-height:18px;padding:0 4px 0 2.6px;text-align:left;white-space:pre;overflow:hidden">0</div>
<div class="a mono" style="left:123.5px;top:37.5px;width:36.5px;height:19px;border-right:1px solid #353535;border-bottom:1px solid #353535;font-size:15.5px;line-height:18px;padding:0 4px 0 4.6px;text-align:left;white-space:pre;overflow:hidden">170</div>
<div class="a mono" style="left:160.0px;top:37.5px;width:45.5px;height:19px;border-right:1px solid #353535;border-bottom:1px solid #353535;font-size:15.5px;line-height:18px;padding:0 4px 0 4.6px;text-align:right;white-space:pre;overflow:hidden">-0.5</div>
<div class="a mono" style="left:205.5px;top:37.5px;width:46px;height:19px;border-right:1px solid #353535;border-bottom:1px solid #353535;font-size:15.5px;line-height:18px;padding:0 4px 0 4.6px;text-align:right;white-space:pre;overflow:hidden">1254</div>
<div class="a mono" style="left:251.5px;top:37.5px;width:40px;height:19px;border-right:1px solid #353535;border-bottom:1px solid #353535;font-size:15.5px;line-height:18px;padding:0 4px 0 4.6px;text-align:right;white-space:pre;overflow:hidden">-13</div>
<div class="a mono" style="left:291.5px;top:37.5px;width:137px;height:19px;border-right:1px solid #353535;border-bottom:1px solid #353535;font-size:15.5px;line-height:18px;padding:0 4px 0 4.6px;text-align:left;white-space:pre;overflow:hidden">CQ</div>
<div class="a mono" style="left:428.5px;top:37.5px;width:111px;height:19px;border-right:1px solid #353535;border-bottom:1px solid #353535;font-size:15.5px;line-height:18px;padding:0 4px 0 4.6px;text-align:left;white-space:pre;overflow:hidden">HA1BF</div>
<div class="a mono" style="left:539.5px;top:37.5px;width:54.299999999999955px;height:19px;border-right:1px solid #353535;border-bottom:1px solid #353535;font-size:15.5px;line-height:18px;padding:0 4px 0 4.6px;text-align:left;white-space:pre;overflow:hidden">JN86</div>
<div class="a mono" style="left:593.8px;top:37.5px;width:179.70000000000005px;height:19px;border-right:1px solid #353535;border-bottom:1px solid #353535;font-size:15.5px;line-height:18px;padding:0 4px 0 4.6px;text-align:left;white-space:pre;overflow:hidden">Hungary</div>
<div class="a mono" style="left:0px;top:56.5px;width:64.5px;height:19px;border-right:1px solid #353535;border-bottom:1px solid #353535;font-size:15.5px;line-height:18px;padding:0 4px 0 4.6px;text-align:left;white-space:pre;overflow:hidden">121145</div>
<div class="a mono" style="left:64.5px;top:56.5px;width:38.7px;height:19px;border-right:1px solid #353535;border-bottom:1px solid #353535;font-size:15.5px;line-height:18px;padding:0 4px 0 4.6px;text-align:right;white-space:pre;overflow:hidden">1</div>
<div class="a mono" style="left:103.0px;top:56.5px;width:20.5px;height:19px;border-right:1px solid #353535;border-bottom:1px solid #353535;font-size:15.5px;line-height:18px;padding:0 4px 0 2.6px;text-align:left;white-space:pre;overflow:hidden">0</div>
<div class="a mono" style="left:123.5px;top:56.5px;width:36.5px;height:19px;border-right:1px solid #353535;border-bottom:1px solid #353535;font-size:15.5px;line-height:18px;padding:0 4px 0 4.6px;text-align:left;white-space:pre;overflow:hidden">152</div>
<div class="a mono" style="left:160.0px;top:56.5px;width:45.5px;height:19px;border-right:1px solid #353535;border-bottom:1px solid #353535;font-size:15.5px;line-height:18px;padding:0 4px 0 4.6px;text-align:right;white-space:pre;overflow:hidden">-0.3</div>
<div class="a mono" style="left:205.5px;top:56.5px;width:46px;height:19px;border-right:1px solid #353535;border-bottom:1px solid #353535;font-size:15.5px;line-height:18px;padding:0 4px 0 4.6px;text-align:right;white-space:pre;overflow:hidden">589</div>
<div class="a mono" style="left:251.5px;top:56.5px;width:40px;height:19px;border-right:1px solid #353535;border-bottom:1px solid #353535;font-size:15.5px;line-height:18px;padding:0 4px 0 4.6px;text-align:right;white-space:pre;overflow:hidden">-24</div>
<div class="a mono" style="left:291.5px;top:56.5px;width:137px;height:19px;border-right:1px solid #353535;border-bottom:1px solid #353535;font-size:15.5px;line-height:18px;padding:0 4px 0 4.6px;text-align:left;white-space:pre;overflow:hidden">CQ</div>
<div class="a mono" style="left:428.5px;top:56.5px;width:111px;height:19px;border-right:1px solid #353535;border-bottom:1px solid #353535;font-size:15.5px;line-height:18px;padding:0 4px 0 4.6px;text-align:left;white-space:pre;overflow:hidden">LY2J</div>
<div class="a mono" style="left:539.5px;top:56.5px;width:54.299999999999955px;height:19px;border-right:1px solid #353535;border-bottom:1px solid #353535;font-size:15.5px;line-height:18px;padding:0 4px 0 4.6px;text-align:left;white-space:pre;overflow:hidden">KO14</div>
<div class="a mono" style="left:593.8px;top:56.5px;width:179.70000000000005px;height:19px;border-right:1px solid #353535;border-bottom:1px solid #353535;font-size:15.5px;line-height:18px;padding:0 4px 0 4.6px;text-align:left;white-space:pre;overflow:hidden">Lithuania</div>
<div class="a mono" style="left:0px;top:75.5px;width:64.5px;height:19px;border-right:1px solid #353535;border-bottom:1px solid #353535;font-size:15.5px;line-height:18px;padding:0 4px 0 4.6px;text-align:left;white-space:pre;overflow:hidden">121145</div>
<div class="a mono" style="left:64.5px;top:75.5px;width:38.7px;height:19px;border-right:1px solid #353535;border-bottom:1px solid #353535;font-size:15.5px;line-height:18px;padding:0 4px 0 4.6px;text-align:right;white-space:pre;overflow:hidden">1</div>
<div class="a mono" style="left:103.0px;top:75.5px;width:20.5px;height:19px;border-right:1px solid #353535;border-bottom:1px solid #353535;font-size:15.5px;line-height:18px;padding:0 4px 0 2.6px;text-align:left;white-space:pre;overflow:hidden">0</div>
<div class="a mono" style="left:123.5px;top:75.5px;width:36.5px;height:19px;border-right:1px solid #353535;border-bottom:1px solid #353535;font-size:15.5px;line-height:18px;padding:0 4px 0 4.6px;text-align:left;white-space:pre;overflow:hidden">148</div>
<div class="a mono" style="left:160.0px;top:75.5px;width:45.5px;height:19px;border-right:1px solid #353535;border-bottom:1px solid #353535;font-size:15.5px;line-height:18px;padding:0 4px 0 4.6px;text-align:right;white-space:pre;overflow:hidden">2.0</div>
<div class="a mono" style="left:205.5px;top:75.5px;width:46px;height:19px;border-right:1px solid #353535;border-bottom:1px solid #353535;font-size:15.5px;line-height:18px;padding:0 4px 0 4.6px;text-align:right;white-space:pre;overflow:hidden">2370</div>
<div class="a mono" style="left:251.5px;top:75.5px;width:40px;height:19px;border-right:1px solid #353535;border-bottom:1px solid #353535;font-size:15.5px;line-height:18px;padding:0 4px 0 4.6px;text-align:right;white-space:pre;overflow:hidden">-20</div>
<div class="a mono" style="left:291.5px;top:75.5px;width:137px;height:19px;border-right:1px solid #353535;border-bottom:1px solid #353535;font-size:15.5px;line-height:18px;padding:0 4px 0 4.6px;text-align:left;white-space:pre;overflow:hidden">ON7KEI</div>
<div class="a mono" style="left:428.5px;top:75.5px;width:111px;height:19px;border-right:1px solid #353535;border-bottom:1px solid #353535;font-size:15.5px;line-height:18px;padding:0 4px 0 4.6px;text-align:left;white-space:pre;overflow:hidden">R3KNL</div>
<div class="a mono" style="left:539.5px;top:75.5px;width:54.299999999999955px;height:19px;border-right:1px solid #353535;border-bottom:1px solid #353535;font-size:15.5px;line-height:18px;padding:0 4px 0 4.6px;text-align:left;white-space:pre;overflow:hidden">73</div>
<div class="a mono" style="left:593.8px;top:75.5px;width:179.70000000000005px;height:19px;border-right:1px solid #353535;border-bottom:1px solid #353535;font-size:15.5px;line-height:18px;padding:0 4px 0 4.6px;text-align:left;white-space:pre;overflow:hidden">EU Russia</div>
<div class="a mono" style="left:0px;top:94.5px;width:64.5px;height:19px;border-right:1px solid #353535;border-bottom:1px solid #353535;font-size:15.5px;line-height:18px;padding:0 4px 0 4.6px;text-align:left;white-space:pre;overflow:hidden">121145</div>
<div class="a mono" style="left:64.5px;top:94.5px;width:38.7px;height:19px;border-right:1px solid #353535;border-bottom:1px solid #353535;font-size:15.5px;line-height:18px;padding:0 4px 0 4.6px;text-align:right;white-space:pre;overflow:hidden">1</div>
<div class="a mono" style="left:103.0px;top:94.5px;width:20.5px;height:19px;border-right:1px solid #353535;border-bottom:1px solid #353535;font-size:15.5px;line-height:18px;padding:0 4px 0 2.6px;text-align:left;white-space:pre;overflow:hidden">0</div>
<div class="a mono" style="left:123.5px;top:94.5px;width:36.5px;height:19px;border-right:1px solid #353535;border-bottom:1px solid #353535;font-size:15.5px;line-height:18px;padding:0 4px 0 4.6px;text-align:left;white-space:pre;overflow:hidden">155</div>
<div class="a mono" style="left:160.0px;top:94.5px;width:45.5px;height:19px;border-right:1px solid #353535;border-bottom:1px solid #353535;font-size:15.5px;line-height:18px;padding:0 4px 0 4.6px;text-align:right;white-space:pre;overflow:hidden">-0.5</div>
<div class="a mono" style="left:205.5px;top:94.5px;width:46px;height:19px;border-right:1px solid #353535;border-bottom:1px solid #353535;font-size:15.5px;line-height:18px;padding:0 4px 0 4.6px;text-align:right;white-space:pre;overflow:hidden">1440</div>
<div class="a mono" style="left:251.5px;top:94.5px;width:40px;height:19px;border-right:1px solid #353535;border-bottom:1px solid #353535;font-size:15.5px;line-height:18px;padding:0 4px 0 4.6px;text-align:right;white-space:pre;overflow:hidden">-20</div>
<div class="a mono" style="left:291.5px;top:94.5px;width:137px;height:19px;border-right:1px solid #353535;border-bottom:1px solid #353535;font-size:15.5px;line-height:18px;padding:0 4px 0 4.6px;text-align:left;white-space:pre;overflow:hidden">CQ</div>
<div class="a mono" style="left:428.5px;top:94.5px;width:111px;height:19px;border-right:1px solid #353535;border-bottom:1px solid #353535;font-size:15.5px;line-height:18px;padding:0 4px 0 4.6px;text-align:left;white-space:pre;overflow:hidden">UD6AMI</div>
<div class="a mono" style="left:539.5px;top:94.5px;width:54.299999999999955px;height:19px;border-right:1px solid #353535;border-bottom:1px solid #353535;font-size:15.5px;line-height:18px;padding:0 4px 0 4.6px;text-align:left;white-space:pre;overflow:hidden">KN84</div>
<div class="a mono" style="left:593.8px;top:94.5px;width:179.70000000000005px;height:19px;border-right:1px solid #353535;border-bottom:1px solid #353535;font-size:15.5px;line-height:18px;padding:0 4px 0 4.6px;text-align:left;white-space:pre;overflow:hidden">EU Russia</div>
<div class="a" style="left:0px;top:0;width:63px;height:21.5px;background:linear-gradient(#5a5a5a,#4c4c4c);border-right:1px solid #3a3a3a;border-left:1px solid #666;text-align:center;line-height:21px;padding-top:1.5px;padding-left:0px">UTC</div>
<div class="a" style="left:63px;top:0;width:36.5px;height:21.5px;background:linear-gradient(#5a5a5a,#4c4c4c);border-right:1px solid #3a3a3a;border-left:1px solid #666;text-align:center;line-height:21px;padding-top:1.5px;padding-left:0px">Typ</div>
<div class="a" style="left:99.5px;top:0;width:2.0px;height:21.5px;background:linear-gradient(#5a5a5a,#4c4c4c);border-right:1px solid #3a3a3a;border-left:1px solid #666;text-align:center;line-height:21px;padding-top:1.5px;padding-left:0px"></div>
<div class="a" style="left:101.5px;top:0;width:20.5px;height:21.5px;background:linear-gradient(#5a5a5a,#4c4c4c);border-right:1px solid #3a3a3a;border-left:1px solid #666;text-align:center;line-height:21px;padding-top:1.5px;padding-left:0px">P</div>
<div class="a" style="left:122px;top:0;width:36.5px;height:21.5px;background:linear-gradient(#5a5a5a,#4c4c4c);border-right:1px solid #3a3a3a;border-left:1px solid #666;text-align:center;line-height:21px;padding-top:1.5px;padding-left:0px">OKb</div>
<div class="a" style="left:158.5px;top:0;width:45.5px;height:21.5px;background:linear-gradient(#5a5a5a,#4c4c4c);border-right:1px solid #3a3a3a;border-left:1px solid #666;text-align:center;line-height:21px;padding-top:1.5px;padding-left:0px">dt</div>
<div class="a" style="left:204px;top:0;width:46px;height:21.5px;background:linear-gradient(#5a5a5a,#4c4c4c);border-right:1px solid #3a3a3a;border-left:1px solid #666;text-align:center;line-height:21px;padding-top:1.5px;padding-left:0px">df</div>
<div class="a" style="left:250px;top:0;width:40px;height:21.5px;background:linear-gradient(#5a5a5a,#4c4c4c);border-right:1px solid #3a3a3a;border-left:1px solid #666;text-align:center;line-height:21px;padding-top:1.5px;padding-left:0px">SNR</div>
<div class="a" style="left:290px;top:0;width:137px;height:21.5px;background:linear-gradient(#5a5a5a,#4c4c4c);border-right:1px solid #3a3a3a;border-left:1px solid #666;text-align:center;line-height:21px;padding-top:1.5px;padding-left:4px">Call1</div>
<div class="a" style="left:427px;top:0;width:111px;height:21.5px;background:linear-gradient(#5a5a5a,#4c4c4c);border-right:1px solid #3a3a3a;border-left:1px solid #666;text-align:center;line-height:21px;padding-top:1.5px;padding-left:4px">Call2</div>
<div class="a" style="left:538px;top:0;width:54.299999999999955px;height:21.5px;background:linear-gradient(#5a5a5a,#4c4c4c);border-right:1px solid #3a3a3a;border-left:1px solid #666;text-align:center;line-height:21px;padding-top:1.5px;padding-left:4px">Loc</div>
<div class="a" style="left:592.3px;top:0;width:179.70000000000005px;height:21.5px;background:linear-gradient(#5a5a5a,#4c4c4c);border-right:1px solid #3a3a3a;border-left:1px solid #666;text-align:center;line-height:21px;padding-top:1.5px;padding-left:4px">Country</div>
</div>
<div class="a" style="left:832px;top:723.5px;width:710px;height:8px;background:#404040;"></div>
<div class="a" style="left:825px;top:731.5px;width:717px;height:26px;background:#202020;"></div>
<div class="b " style="left:827px;top:733px;width:22.8px;height:22.8px;"><svg viewBox="1 1 22 22" fill="none" stroke="#fff" stroke-width="1.6" stroke-linecap="round" stroke-linejoin="round"><circle cx="13.4" cy="12" r="7" stroke-width="1.6"/><path d="M13.4 8.3V15.7M9.7 12H17.1" stroke-width="1.7"/><path d="M4.8 4Q1.2 12 4.8 20" stroke-width="1.6"/></svg></div>
<div class="b " style="left:852px;top:733px;width:22.8px;height:22.8px;"><svg viewBox="1 1 22 22" fill="none" stroke="#fff" stroke-width="1.6" stroke-linecap="round" stroke-linejoin="round"><path d="M17.5 7.5A7.2 7.2 0 1 0 17.5 16.5" stroke-width="1.8"/><path d="M9.5 12H17" stroke-width="2" stroke-linecap="butt"/><path d="M16 8L21.5 12L16 16Z" fill="#fff" stroke="none"/></svg></div>
<div class="t " style="left:915px;top:735.4px;">14 074 000</div>
<div class="a" style="left:1543px;top:49px;width:17px;height:717px;background:#505050;"></div>
<div class="a" style="left:1543px;top:49px;width:17px;height:15px;background:#5c5c5c;border-bottom:1px solid #333"></div>
<div class="a" style="left:1544.5px;top:64.5px;width:15.5px;height:579.5px;background:linear-gradient(90deg,#666,#5a5a5a);border:1px solid #444"></div>
<div class="a" style="left:1543px;top:750px;width:17px;height:16px;background:#5c5c5c;border-top:1px solid #333"></div>
<div class="tri" style="left:1547px;top:53px;border:5px solid transparent;border-bottom:6px solid #bbb;border-top:0"></div>
<div class="tri" style="left:1547px;top:756px;border:5px solid transparent;border-top:6px solid #bbb;border-bottom:0"></div>
</body></html>
